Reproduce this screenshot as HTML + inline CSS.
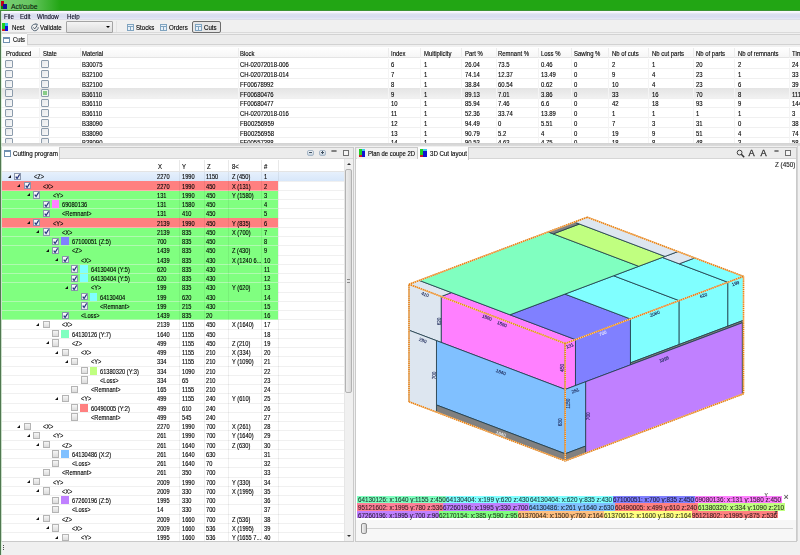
<!DOCTYPE html><html><head><meta charset="utf-8"><style>
*{margin:0;padding:0;box-sizing:border-box}
html,body{width:800px;height:555px;overflow:hidden;background:#f0f0f0;font-family:"Liberation Sans",sans-serif;color:#000}
.a{position:absolute}
.t{position:absolute;white-space:nowrap;line-height:1;transform-origin:0 50%;-webkit-text-stroke:0.12px currentColor}
.cb{position:absolute;width:8px;height:8px;border:1px solid #8c9cac;border-radius:1px;background:linear-gradient(135deg,#e6e9ec,#f8f8f8)}
</style></head><body><div id="wrap" class="a" style="left:0;top:0;width:800px;height:555px;overflow:hidden;filter:blur(0.3px)">
<div class="a" style="left:0px;top:0px;width:800px;height:11px;background:#22a614;"></div>
<div class="a" style="left:0px;top:0px;width:800px;height:11px;background:linear-gradient(90deg,rgba(150,220,150,0.75) 0px,rgba(150,220,150,0.6) 30px,rgba(34,166,20,0) 60px);"></div>
<div class="a" style="left:0px;top:9.8px;width:800px;height:1.2px;background:#3c9434;"></div>
<div class="a" style="left:1px;top:1px;width:3px;height:5px;background:#c00018;"></div>
<div class="a" style="left:3px;top:4px;width:4px;height:5px;background:#101098;"></div>
<div class="a" style="left:1px;top:6px;width:2px;height:3px;background:#108010;"></div>
<div class="t" style="left:11.00px;top:3.00px;font-size:7.4px;transform:scaleX(0.92);color:#0c1c0c">Act/cube</div>
<div class="a" style="left:1px;top:11px;width:799px;height:9px;background:linear-gradient(#fbfcff 0px,#f4f4fc 1.5px,#dcdff0 3px,#d8dcf0 6px,#e6e8f6 8px,#d4d4dc 9px);"></div>
<div class="t" style="left:3.50px;top:14.00px;font-size:6.8px;transform:scaleX(0.9);color:#0a0a1e">File</div>
<div class="t" style="left:20.00px;top:14.00px;font-size:6.8px;transform:scaleX(0.9);color:#0a0a1e">Edit</div>
<div class="t" style="left:37.00px;top:14.00px;font-size:6.8px;transform:scaleX(0.9);color:#0a0a1e">Window</div>
<div class="t" style="left:67.00px;top:14.00px;font-size:6.8px;transform:scaleX(0.9);color:#0a0a1e">Help</div>
<div class="a" style="left:1px;top:20px;width:799px;height:13px;background:#f0f0f0;border-bottom:1px solid #dadada"></div>
<div class="a" style="left:2px;top:23px;width:3px;height:8px;background:#20d020;"></div>
<div class="a" style="left:2px;top:29px;width:3px;height:2px;background:#d02020;"></div>
<div class="a" style="left:5px;top:23px;width:3px;height:3px;background:#30c0f0;"></div>
<div class="a" style="left:5px;top:26px;width:3px;height:5px;background:#1010e0;"></div>
<div class="t" style="left:12.00px;top:25.00px;font-size:6.8px;transform:scaleX(0.9)">Nest</div>
<svg class="a" style="left:30.5px;top:22.5px" width="8" height="9" viewBox="0 0 8 9"><path d="M5.6 1.6 A3.3 3.3 0 1 0 7.2 4.2" stroke="#586878" stroke-width="1" fill="none"/><path d="M4.4 0.6 L6.6 1.4 L5.4 3.2" stroke="#586878" stroke-width="0.8" fill="none"/><path d="M2.4 4.4 L3.7 5.9 L6 2.9" stroke="#3a4a5a" stroke-width="0.9" fill="none"/></svg>
<div class="t" style="left:40.00px;top:25.00px;font-size:6.8px;transform:scaleX(0.9)">Validate</div>
<div class="a" style="left:66px;top:21px;width:47px;height:12px;background:linear-gradient(#f4f4f4,#dedede);border:1px solid #a4a4a4;border-radius:1px"></div>
<div class="a" style="left:105.5px;top:26px;width:0;height:0;border-left:2px solid transparent;border-right:2px solid transparent;border-top:2.2px solid #000"></div>
<div class="a" style="left:116px;top:21px;width:1px;height:11px;background:#e4e4e4;"></div>
<div class="a" style="left:127px;top:23.5px;width:7px;height:7px;border:1px solid #80a4c0;background:#e8f0f8"></div><div class="a" style="left:127px;top:25.5px;width:7px;height:1px;background:#80a4c0"></div><div class="a" style="left:129.5px;top:25.5px;width:1px;height:5px;background:#80a4c0"></div>
<div class="t" style="left:136.00px;top:25.00px;font-size:6.8px;transform:scaleX(0.9)">Stocks</div>
<div class="a" style="left:160px;top:23.5px;width:7px;height:7px;border:1px solid #80a4c0;background:#e8f0f8"></div><div class="a" style="left:160px;top:25.5px;width:7px;height:1px;background:#80a4c0"></div><div class="a" style="left:162.5px;top:25.5px;width:1px;height:5px;background:#80a4c0"></div>
<div class="t" style="left:169.00px;top:25.00px;font-size:6.8px;transform:scaleX(0.9)">Orders</div>
<div class="a" style="left:192px;top:21px;width:29px;height:11.5px;background:#e6e6e6;border:1px solid #6c6c6c;border-radius:2px"></div>
<div class="a" style="left:195px;top:23.5px;width:7px;height:7px;border:1px solid #80a4c0;background:#e8f0f8"></div><div class="a" style="left:195px;top:25.5px;width:7px;height:1px;background:#80a4c0"></div><div class="a" style="left:197.5px;top:25.5px;width:1px;height:5px;background:#80a4c0"></div>
<div class="t" style="left:204.00px;top:25.00px;font-size:6.8px;transform:scaleX(0.9)">Cuts</div>
<div class="a" style="left:1px;top:33px;width:799px;height:13px;background:#f0f0f0;"></div>
<div class="a" style="left:27px;top:34px;width:773px;height:11px;background:#ececec;border:1px solid #d2d2d2;border-right:none"></div>
<div class="a" style="left:1px;top:33px;width:26px;height:13px;background:#fbfbfb;border-top:1px solid #dcdcdc"></div>
<div class="a" style="left:3px;top:36.5px;width:7px;height:6.5px;border:1px solid #7090b0;border-top-width:2px;background:#fff"></div>
<div class="t" style="left:13.00px;top:37.00px;font-size:6.8px;transform:scaleX(0.85)">Cuts</div>
<div class="a" style="left:1px;top:46.5px;width:799px;height:96px;background:#fff;"></div>
<div class="a" style="left:1px;top:46.5px;width:799px;height:11.5px;background:linear-gradient(#ffffff,#f6f6f6);border-bottom:1px solid #e4e4e4"></div>
<div class="t" style="left:6.00px;top:51.00px;font-size:6.6px;transform:scaleX(0.9)">Produced</div>
<div class="a" style="left:39px;top:47.5px;width:0.7px;height:10px;background:#ececec;"></div>
<div class="t" style="left:43.00px;top:51.00px;font-size:6.6px;transform:scaleX(0.9)">State</div>
<div class="a" style="left:80px;top:47.5px;width:0.7px;height:10px;background:#ececec;"></div>
<div class="t" style="left:82.00px;top:51.00px;font-size:6.6px;transform:scaleX(0.9)">Material</div>
<div class="a" style="left:237.5px;top:47.5px;width:0.7px;height:10px;background:#ececec;"></div>
<div class="t" style="left:240.00px;top:51.00px;font-size:6.6px;transform:scaleX(0.9)">Block</div>
<div class="a" style="left:388px;top:47.5px;width:0.7px;height:10px;background:#ececec;"></div>
<div class="t" style="left:390.50px;top:51.00px;font-size:6.6px;transform:scaleX(0.9)">Index</div>
<div class="a" style="left:420px;top:47.5px;width:0.7px;height:10px;background:#ececec;"></div>
<div class="t" style="left:423.50px;top:51.00px;font-size:6.6px;transform:scaleX(0.9)">Multiplicity</div>
<div class="a" style="left:461px;top:47.5px;width:0.7px;height:10px;background:#ececec;"></div>
<div class="t" style="left:465.00px;top:51.00px;font-size:6.6px;transform:scaleX(0.9)">Part %</div>
<div class="a" style="left:495.5px;top:47.5px;width:0.7px;height:10px;background:#ececec;"></div>
<div class="t" style="left:498.00px;top:51.00px;font-size:6.6px;transform:scaleX(0.9)">Remnant %</div>
<div class="a" style="left:538px;top:47.5px;width:0.7px;height:10px;background:#ececec;"></div>
<div class="t" style="left:541.00px;top:51.00px;font-size:6.6px;transform:scaleX(0.9)">Loss %</div>
<div class="a" style="left:571px;top:47.5px;width:0.7px;height:10px;background:#ececec;"></div>
<div class="t" style="left:574.00px;top:51.00px;font-size:6.6px;transform:scaleX(0.9)">Sawing %</div>
<div class="a" style="left:608.4px;top:47.5px;width:0.7px;height:10px;background:#ececec;"></div>
<div class="t" style="left:612.00px;top:51.00px;font-size:6.6px;transform:scaleX(0.9)">Nb of cuts</div>
<div class="a" style="left:648.3px;top:47.5px;width:0.7px;height:10px;background:#ececec;"></div>
<div class="t" style="left:651.70px;top:51.00px;font-size:6.6px;transform:scaleX(0.9)">Nb cut parts</div>
<div class="a" style="left:693px;top:47.5px;width:0.7px;height:10px;background:#ececec;"></div>
<div class="t" style="left:696.00px;top:51.00px;font-size:6.6px;transform:scaleX(0.9)">Nb of parts</div>
<div class="a" style="left:734.4px;top:47.5px;width:0.7px;height:10px;background:#ececec;"></div>
<div class="t" style="left:738.00px;top:51.00px;font-size:6.6px;transform:scaleX(0.9)">Nb of remnants</div>
<div class="a" style="left:788.7px;top:47.5px;width:0.7px;height:10px;background:#ececec;"></div>
<div class="t" style="left:792.00px;top:51.00px;font-size:6.6px;transform:scaleX(0.9)">Time</div>
<div class="a" style="left:900px;top:47.5px;width:0.7px;height:10px;background:#ececec;"></div>
<div class="a" style="left:1px;top:59.0px;width:799px;height:83.5px;overflow:hidden">
<div class="a" style="left:0px;top:9.25px;width:799px;height:0.5px;background:#f0f0f0;"></div>
<div class="cb" style="left:4px;top:1.2px"></div>
<div class="cb" style="left:39.5px;top:1.2px"></div>
<div class="t" style="left:81.00px;top:3.00px;font-size:6.6px;transform:scaleX(0.9)">B30075</div>
<div class="t" style="left:239.00px;top:3.00px;font-size:6.6px;transform:scaleX(0.9)">CH-02072018-006</div>
<div class="t" style="left:389.50px;top:3.00px;font-size:6.6px;transform:scaleX(0.9)">6</div>
<div class="t" style="left:422.50px;top:3.00px;font-size:6.6px;transform:scaleX(0.9)">1</div>
<div class="t" style="left:464.00px;top:3.00px;font-size:6.6px;transform:scaleX(0.9)">26.04</div>
<div class="t" style="left:497.00px;top:3.00px;font-size:6.6px;transform:scaleX(0.9)">73.5</div>
<div class="t" style="left:540.00px;top:3.00px;font-size:6.6px;transform:scaleX(0.9)">0.46</div>
<div class="t" style="left:573.00px;top:3.00px;font-size:6.6px;transform:scaleX(0.9)">0</div>
<div class="t" style="left:611.00px;top:3.00px;font-size:6.6px;transform:scaleX(0.9)">2</div>
<div class="t" style="left:650.70px;top:3.00px;font-size:6.6px;transform:scaleX(0.9)">1</div>
<div class="t" style="left:695.00px;top:3.00px;font-size:6.6px;transform:scaleX(0.9)">20</div>
<div class="t" style="left:737.00px;top:3.00px;font-size:6.6px;transform:scaleX(0.9)">2</div>
<div class="t" style="left:791.00px;top:3.00px;font-size:6.6px;transform:scaleX(0.9)">24</div>
<div class="a" style="left:0px;top:19.0px;width:799px;height:0.5px;background:#f0f0f0;"></div>
<div class="cb" style="left:4px;top:10.95px"></div>
<div class="cb" style="left:39.5px;top:10.95px"></div>
<div class="t" style="left:81.00px;top:13.00px;font-size:6.6px;transform:scaleX(0.9)">B32100</div>
<div class="t" style="left:239.00px;top:13.00px;font-size:6.6px;transform:scaleX(0.9)">CH-02072018-014</div>
<div class="t" style="left:389.50px;top:13.00px;font-size:6.6px;transform:scaleX(0.9)">7</div>
<div class="t" style="left:422.50px;top:13.00px;font-size:6.6px;transform:scaleX(0.9)">1</div>
<div class="t" style="left:464.00px;top:13.00px;font-size:6.6px;transform:scaleX(0.9)">74.14</div>
<div class="t" style="left:497.00px;top:13.00px;font-size:6.6px;transform:scaleX(0.9)">12.37</div>
<div class="t" style="left:540.00px;top:13.00px;font-size:6.6px;transform:scaleX(0.9)">13.49</div>
<div class="t" style="left:573.00px;top:13.00px;font-size:6.6px;transform:scaleX(0.9)">0</div>
<div class="t" style="left:611.00px;top:13.00px;font-size:6.6px;transform:scaleX(0.9)">9</div>
<div class="t" style="left:650.70px;top:13.00px;font-size:6.6px;transform:scaleX(0.9)">4</div>
<div class="t" style="left:695.00px;top:13.00px;font-size:6.6px;transform:scaleX(0.9)">23</div>
<div class="t" style="left:737.00px;top:13.00px;font-size:6.6px;transform:scaleX(0.9)">1</div>
<div class="t" style="left:791.00px;top:13.00px;font-size:6.6px;transform:scaleX(0.9)">33</div>
<div class="a" style="left:0px;top:28.75px;width:799px;height:0.5px;background:#f0f0f0;"></div>
<div class="cb" style="left:4px;top:20.7px"></div>
<div class="cb" style="left:39.5px;top:20.7px"></div>
<div class="t" style="left:81.00px;top:23.00px;font-size:6.6px;transform:scaleX(0.9)">B32100</div>
<div class="t" style="left:239.00px;top:23.00px;font-size:6.6px;transform:scaleX(0.9)">FF00678992</div>
<div class="t" style="left:389.50px;top:23.00px;font-size:6.6px;transform:scaleX(0.9)">8</div>
<div class="t" style="left:422.50px;top:23.00px;font-size:6.6px;transform:scaleX(0.9)">1</div>
<div class="t" style="left:464.00px;top:23.00px;font-size:6.6px;transform:scaleX(0.9)">38.84</div>
<div class="t" style="left:497.00px;top:23.00px;font-size:6.6px;transform:scaleX(0.9)">60.54</div>
<div class="t" style="left:540.00px;top:23.00px;font-size:6.6px;transform:scaleX(0.9)">0.62</div>
<div class="t" style="left:573.00px;top:23.00px;font-size:6.6px;transform:scaleX(0.9)">0</div>
<div class="t" style="left:611.00px;top:23.00px;font-size:6.6px;transform:scaleX(0.9)">10</div>
<div class="t" style="left:650.70px;top:23.00px;font-size:6.6px;transform:scaleX(0.9)">4</div>
<div class="t" style="left:695.00px;top:23.00px;font-size:6.6px;transform:scaleX(0.9)">23</div>
<div class="t" style="left:737.00px;top:23.00px;font-size:6.6px;transform:scaleX(0.9)">6</div>
<div class="t" style="left:791.00px;top:23.00px;font-size:6.6px;transform:scaleX(0.9)">39</div>
<div class="a" style="left:0px;top:28.75px;width:799px;height:10.25px;background:linear-gradient(#e4e4e4,#f1f1f1);"></div>
<div class="a" style="left:0px;top:38.5px;width:799px;height:0.5px;background:#f0f0f0;"></div>
<div class="cb" style="left:4px;top:30.45px"></div>
<div class="cb" style="left:39.5px;top:30.45px;background:#eef6ee"></div>
<div class="a" style="left:41.5px;top:32.45px;width:4px;height:4px;background:#88cc88;"></div>
<div class="t" style="left:81.00px;top:33.00px;font-size:6.6px;transform:scaleX(0.9)">B36110</div>
<div class="t" style="left:239.00px;top:33.00px;font-size:6.6px;transform:scaleX(0.9)">FF00680476</div>
<div class="t" style="left:389.50px;top:33.00px;font-size:6.6px;transform:scaleX(0.9)">9</div>
<div class="t" style="left:422.50px;top:33.00px;font-size:6.6px;transform:scaleX(0.9)">1</div>
<div class="t" style="left:464.00px;top:33.00px;font-size:6.6px;transform:scaleX(0.9)">89.13</div>
<div class="t" style="left:497.00px;top:33.00px;font-size:6.6px;transform:scaleX(0.9)">7.01</div>
<div class="t" style="left:540.00px;top:33.00px;font-size:6.6px;transform:scaleX(0.9)">3.86</div>
<div class="t" style="left:573.00px;top:33.00px;font-size:6.6px;transform:scaleX(0.9)">0</div>
<div class="t" style="left:611.00px;top:33.00px;font-size:6.6px;transform:scaleX(0.9)">33</div>
<div class="t" style="left:650.70px;top:33.00px;font-size:6.6px;transform:scaleX(0.9)">16</div>
<div class="t" style="left:695.00px;top:33.00px;font-size:6.6px;transform:scaleX(0.9)">70</div>
<div class="t" style="left:737.00px;top:33.00px;font-size:6.6px;transform:scaleX(0.9)">8</div>
<div class="t" style="left:791.00px;top:33.00px;font-size:6.6px;transform:scaleX(0.9)">111</div>
<div class="a" style="left:0px;top:48.25px;width:799px;height:0.5px;background:#f0f0f0;"></div>
<div class="cb" style="left:4px;top:40.2px"></div>
<div class="cb" style="left:39.5px;top:40.2px"></div>
<div class="t" style="left:81.00px;top:42.00px;font-size:6.6px;transform:scaleX(0.9)">B36110</div>
<div class="t" style="left:239.00px;top:42.00px;font-size:6.6px;transform:scaleX(0.9)">FF00680477</div>
<div class="t" style="left:389.50px;top:42.00px;font-size:6.6px;transform:scaleX(0.9)">10</div>
<div class="t" style="left:422.50px;top:42.00px;font-size:6.6px;transform:scaleX(0.9)">1</div>
<div class="t" style="left:464.00px;top:42.00px;font-size:6.6px;transform:scaleX(0.9)">85.94</div>
<div class="t" style="left:497.00px;top:42.00px;font-size:6.6px;transform:scaleX(0.9)">7.46</div>
<div class="t" style="left:540.00px;top:42.00px;font-size:6.6px;transform:scaleX(0.9)">6.6</div>
<div class="t" style="left:573.00px;top:42.00px;font-size:6.6px;transform:scaleX(0.9)">0</div>
<div class="t" style="left:611.00px;top:42.00px;font-size:6.6px;transform:scaleX(0.9)">42</div>
<div class="t" style="left:650.70px;top:42.00px;font-size:6.6px;transform:scaleX(0.9)">18</div>
<div class="t" style="left:695.00px;top:42.00px;font-size:6.6px;transform:scaleX(0.9)">93</div>
<div class="t" style="left:737.00px;top:42.00px;font-size:6.6px;transform:scaleX(0.9)">9</div>
<div class="t" style="left:791.00px;top:42.00px;font-size:6.6px;transform:scaleX(0.9)">144</div>
<div class="a" style="left:0px;top:58.0px;width:799px;height:0.5px;background:#f0f0f0;"></div>
<div class="cb" style="left:4px;top:49.95px"></div>
<div class="cb" style="left:39.5px;top:49.95px"></div>
<div class="t" style="left:81.00px;top:52.00px;font-size:6.6px;transform:scaleX(0.9)">B36110</div>
<div class="t" style="left:239.00px;top:52.00px;font-size:6.6px;transform:scaleX(0.9)">CH-02072018-016</div>
<div class="t" style="left:389.50px;top:52.00px;font-size:6.6px;transform:scaleX(0.9)">11</div>
<div class="t" style="left:422.50px;top:52.00px;font-size:6.6px;transform:scaleX(0.9)">1</div>
<div class="t" style="left:464.00px;top:52.00px;font-size:6.6px;transform:scaleX(0.9)">52.36</div>
<div class="t" style="left:497.00px;top:52.00px;font-size:6.6px;transform:scaleX(0.9)">33.74</div>
<div class="t" style="left:540.00px;top:52.00px;font-size:6.6px;transform:scaleX(0.9)">13.89</div>
<div class="t" style="left:573.00px;top:52.00px;font-size:6.6px;transform:scaleX(0.9)">0</div>
<div class="t" style="left:611.00px;top:52.00px;font-size:6.6px;transform:scaleX(0.9)">1</div>
<div class="t" style="left:650.70px;top:52.00px;font-size:6.6px;transform:scaleX(0.9)">1</div>
<div class="t" style="left:695.00px;top:52.00px;font-size:6.6px;transform:scaleX(0.9)">1</div>
<div class="t" style="left:737.00px;top:52.00px;font-size:6.6px;transform:scaleX(0.9)">1</div>
<div class="t" style="left:791.00px;top:52.00px;font-size:6.6px;transform:scaleX(0.9)">3</div>
<div class="a" style="left:0px;top:67.75px;width:799px;height:0.5px;background:#f0f0f0;"></div>
<div class="cb" style="left:4px;top:59.7px"></div>
<div class="cb" style="left:39.5px;top:59.7px"></div>
<div class="t" style="left:81.00px;top:62.00px;font-size:6.6px;transform:scaleX(0.9)">B38090</div>
<div class="t" style="left:239.00px;top:62.00px;font-size:6.6px;transform:scaleX(0.9)">FB00256959</div>
<div class="t" style="left:389.50px;top:62.00px;font-size:6.6px;transform:scaleX(0.9)">12</div>
<div class="t" style="left:422.50px;top:62.00px;font-size:6.6px;transform:scaleX(0.9)">1</div>
<div class="t" style="left:464.00px;top:62.00px;font-size:6.6px;transform:scaleX(0.9)">94.49</div>
<div class="t" style="left:497.00px;top:62.00px;font-size:6.6px;transform:scaleX(0.9)">0</div>
<div class="t" style="left:540.00px;top:62.00px;font-size:6.6px;transform:scaleX(0.9)">5.51</div>
<div class="t" style="left:573.00px;top:62.00px;font-size:6.6px;transform:scaleX(0.9)">0</div>
<div class="t" style="left:611.00px;top:62.00px;font-size:6.6px;transform:scaleX(0.9)">7</div>
<div class="t" style="left:650.70px;top:62.00px;font-size:6.6px;transform:scaleX(0.9)">3</div>
<div class="t" style="left:695.00px;top:62.00px;font-size:6.6px;transform:scaleX(0.9)">31</div>
<div class="t" style="left:737.00px;top:62.00px;font-size:6.6px;transform:scaleX(0.9)">0</div>
<div class="t" style="left:791.00px;top:62.00px;font-size:6.6px;transform:scaleX(0.9)">38</div>
<div class="a" style="left:0px;top:77.5px;width:799px;height:0.5px;background:#f0f0f0;"></div>
<div class="cb" style="left:4px;top:69.45px"></div>
<div class="cb" style="left:39.5px;top:69.45px"></div>
<div class="t" style="left:81.00px;top:72.00px;font-size:6.6px;transform:scaleX(0.9)">B38090</div>
<div class="t" style="left:239.00px;top:72.00px;font-size:6.6px;transform:scaleX(0.9)">FB00256958</div>
<div class="t" style="left:389.50px;top:72.00px;font-size:6.6px;transform:scaleX(0.9)">13</div>
<div class="t" style="left:422.50px;top:72.00px;font-size:6.6px;transform:scaleX(0.9)">1</div>
<div class="t" style="left:464.00px;top:72.00px;font-size:6.6px;transform:scaleX(0.9)">90.79</div>
<div class="t" style="left:497.00px;top:72.00px;font-size:6.6px;transform:scaleX(0.9)">5.2</div>
<div class="t" style="left:540.00px;top:72.00px;font-size:6.6px;transform:scaleX(0.9)">4</div>
<div class="t" style="left:573.00px;top:72.00px;font-size:6.6px;transform:scaleX(0.9)">0</div>
<div class="t" style="left:611.00px;top:72.00px;font-size:6.6px;transform:scaleX(0.9)">19</div>
<div class="t" style="left:650.70px;top:72.00px;font-size:6.6px;transform:scaleX(0.9)">9</div>
<div class="t" style="left:695.00px;top:72.00px;font-size:6.6px;transform:scaleX(0.9)">51</div>
<div class="t" style="left:737.00px;top:72.00px;font-size:6.6px;transform:scaleX(0.9)">4</div>
<div class="t" style="left:791.00px;top:72.00px;font-size:6.6px;transform:scaleX(0.9)">74</div>
<div class="a" style="left:0px;top:87.25px;width:799px;height:0.5px;background:#f0f0f0;"></div>
<div class="cb" style="left:4px;top:79.2px"></div>
<div class="cb" style="left:39.5px;top:79.2px"></div>
<div class="t" style="left:81.00px;top:81.00px;font-size:6.6px;transform:scaleX(0.9)">B38090</div>
<div class="t" style="left:239.00px;top:81.00px;font-size:6.6px;transform:scaleX(0.9)">FF00557388</div>
<div class="t" style="left:389.50px;top:81.00px;font-size:6.6px;transform:scaleX(0.9)">14</div>
<div class="t" style="left:422.50px;top:81.00px;font-size:6.6px;transform:scaleX(0.9)">1</div>
<div class="t" style="left:464.00px;top:81.00px;font-size:6.6px;transform:scaleX(0.9)">90.53</div>
<div class="t" style="left:497.00px;top:81.00px;font-size:6.6px;transform:scaleX(0.9)">4.63</div>
<div class="t" style="left:540.00px;top:81.00px;font-size:6.6px;transform:scaleX(0.9)">4.75</div>
<div class="t" style="left:573.00px;top:81.00px;font-size:6.6px;transform:scaleX(0.9)">0</div>
<div class="t" style="left:611.00px;top:81.00px;font-size:6.6px;transform:scaleX(0.9)">18</div>
<div class="t" style="left:650.70px;top:81.00px;font-size:6.6px;transform:scaleX(0.9)">8</div>
<div class="t" style="left:695.00px;top:81.00px;font-size:6.6px;transform:scaleX(0.9)">48</div>
<div class="t" style="left:737.00px;top:81.00px;font-size:6.6px;transform:scaleX(0.9)">3</div>
<div class="t" style="left:791.00px;top:81.00px;font-size:6.6px;transform:scaleX(0.9)">58</div>
<div class="a" style="left:38px;top:0px;width:0.6px;height:84px;background:#f4f4f4;"></div>
<div class="a" style="left:79px;top:0px;width:0.6px;height:84px;background:#f4f4f4;"></div>
<div class="a" style="left:236.5px;top:0px;width:0.6px;height:84px;background:#f4f4f4;"></div>
<div class="a" style="left:387px;top:0px;width:0.6px;height:84px;background:#f4f4f4;"></div>
<div class="a" style="left:419px;top:0px;width:0.6px;height:84px;background:#f4f4f4;"></div>
<div class="a" style="left:460px;top:0px;width:0.6px;height:84px;background:#f4f4f4;"></div>
<div class="a" style="left:494.5px;top:0px;width:0.6px;height:84px;background:#f4f4f4;"></div>
<div class="a" style="left:537px;top:0px;width:0.6px;height:84px;background:#f4f4f4;"></div>
<div class="a" style="left:570px;top:0px;width:0.6px;height:84px;background:#f4f4f4;"></div>
<div class="a" style="left:607.4px;top:0px;width:0.6px;height:84px;background:#f4f4f4;"></div>
<div class="a" style="left:647.3px;top:0px;width:0.6px;height:84px;background:#f4f4f4;"></div>
<div class="a" style="left:692px;top:0px;width:0.6px;height:84px;background:#f4f4f4;"></div>
<div class="a" style="left:733.4px;top:0px;width:0.6px;height:84px;background:#f4f4f4;"></div>
<div class="a" style="left:787.7px;top:0px;width:0.6px;height:84px;background:#f4f4f4;"></div>
<div class="a" style="left:899px;top:0px;width:0.6px;height:84px;background:#f4f4f4;"></div>
</div>
<div class="a" style="left:1px;top:142.5px;width:799px;height:3.5px;background:linear-gradient(#d2d2d2,#dcdcdc);"></div>
<div class="a" style="left:1px;top:146px;width:799px;height:395px;background:#f0f0f0;"></div>
<div class="a" style="left:1px;top:146.5px;width:352.5px;height:395.5px;background:#fff;border:1px solid #cacaca"></div>
<div class="a" style="left:2px;top:147.5px;width:350.5px;height:11.5px;background:#ececec;border-bottom:1px solid #d6d6d6"></div>
<div class="a" style="left:2px;top:147.0px;width:58px;height:12.5px;background:#fdfdfd;border-right:1px solid #cacaca"></div>
<div class="a" style="left:3.5px;top:150px;width:7px;height:6.5px;border:1px solid #7090b0;border-top-width:2px;background:#fff"></div>
<div class="t" style="left:13.00px;top:151.00px;font-size:6.8px;transform:scaleX(0.92)">Cutting program</div>
<div class="a" style="left:307px;top:149.5px;width:6.8px;height:6.8px;border:1px solid #a8b8c8;border-radius:2px;background:linear-gradient(#f4f6f8,#c4d0dc)"></div>
<div class="a" style="left:308.8px;top:152.4px;width:3.2px;height:1px;background:#405060;"></div>
<div class="a" style="left:319px;top:149.5px;width:6.8px;height:6.8px;border:1px solid #a8b8c8;border-radius:2px;background:linear-gradient(#f4f6f8,#c4d0dc)"></div>
<div class="a" style="left:320.8px;top:152.4px;width:3.2px;height:1px;background:#405060;"></div>
<div class="a" style="left:321.9px;top:151.3px;width:1px;height:3.2px;background:#405060;"></div>
<div class="a" style="left:331px;top:149.6px;width:5.5px;height:2.4px;border:0.8px solid #808080;border-radius:1.2px;background:#c8c8c8"></div>
<div class="a" style="left:342.5px;top:149.5px;width:6px;height:6px;border:1px solid #707070;border-top-width:1.8px;background:#f4f4f4"></div>
<div class="t" style="left:157.50px;top:164.00px;font-size:6.6px;transform:scaleX(0.9)">X</div>
<div class="t" style="left:182.00px;top:164.00px;font-size:6.6px;transform:scaleX(0.9)">Y</div>
<div class="t" style="left:206.50px;top:164.00px;font-size:6.6px;transform:scaleX(0.9)">Z</div>
<div class="t" style="left:231.50px;top:164.00px;font-size:6.6px;transform:scaleX(0.9)">8&lt;</div>
<div class="t" style="left:264.00px;top:164.00px;font-size:6.6px;transform:scaleX(0.9)">#</div>
<div class="a" style="left:179px;top:160px;width:0.7px;height:11px;background:#e8e8e8;"></div>
<div class="a" style="left:203.5px;top:160px;width:0.7px;height:11px;background:#e8e8e8;"></div>
<div class="a" style="left:228px;top:160px;width:0.7px;height:11px;background:#e8e8e8;"></div>
<div class="a" style="left:261px;top:160px;width:0.7px;height:11px;background:#e8e8e8;"></div>
<div class="a" style="left:277.5px;top:160px;width:0.7px;height:11px;background:#e8e8e8;"></div>
<div class="a" style="left:2px;top:171.4px;width:342px;height:0.6px;background:#e4e4e4;"></div>
<div class="a" style="left:2px;top:172px;width:342px;height:369px;overflow:hidden">
<div class="a" style="left:0px;top:-0.3px;width:342px;height:8.95px;background:linear-gradient(#e6f0fc,#d8e7fa);"></div>
<div class="a" style="left:0px;top:8.55px;width:342px;height:0.7px;background:#f0f0f0;"></div>
<div class="a" style="left:5.8px;top:2.8px;width:0;height:0;border-left:3px solid transparent;border-bottom:3px solid #111"></div>
<div class="a" style="left:12.0px;top:0.9px;width:7.2px;height:7.2px;border:1px solid #8a96ac;background:linear-gradient(#fafafa,#e2e6ee)"></div>
<svg class="a" style="left:12.0px;top:0.9px" width="7.2" height="7.2" viewBox="0 0 7 7"><path d="M1.7 3.5 L3 5.3 L5.5 1.3" stroke="#20307a" stroke-width="1.1" fill="none"/></svg>
<div class="t" style="left:31.50px;top:2.00px;font-size:6.6px;transform:scaleX(0.86)">&lt;Z&gt;</div>
<div class="t" style="left:155.00px;top:2.00px;font-size:6.6px;transform:scaleX(0.86)">2270</div>
<div class="t" style="left:179.50px;top:2.00px;font-size:6.6px;transform:scaleX(0.86)">1990</div>
<div class="t" style="left:204.00px;top:2.00px;font-size:6.6px;transform:scaleX(0.86)">1150</div>
<div class="t" style="left:229.50px;top:2.00px;font-size:6.6px;transform:scaleX(0.86)">Z (450)</div>
<div class="t" style="left:262.00px;top:2.00px;font-size:6.6px;transform:scaleX(0.86)">1</div>
<div class="a" style="left:0px;top:9.25px;width:275.8px;height:8.55px;background:#ff8080;"></div>
<div class="a" style="left:0px;top:17.8px;width:275.8px;height:0.7px;background:#ffb0b0;"></div>
<div class="a" style="left:275.8px;top:17.8px;width:66.2px;height:0.7px;background:#f0f0f0;"></div>
<div class="a" style="left:15.3px;top:12.05px;width:0;height:0;border-left:3px solid transparent;border-bottom:3px solid #111"></div>
<div class="a" style="left:21.5px;top:10.15px;width:7.2px;height:7.2px;border:1px solid #8a96ac;background:linear-gradient(#fafafa,#e2e6ee)"></div>
<svg class="a" style="left:21.5px;top:10.15px" width="7.2" height="7.2" viewBox="0 0 7 7"><path d="M1.7 3.5 L3 5.3 L5.5 1.3" stroke="#20307a" stroke-width="1.1" fill="none"/></svg>
<div class="t" style="left:41.00px;top:12.00px;font-size:6.6px;transform:scaleX(0.86)">&lt;X&gt;</div>
<div class="t" style="left:155.00px;top:12.00px;font-size:6.6px;transform:scaleX(0.86)">2270</div>
<div class="t" style="left:179.50px;top:12.00px;font-size:6.6px;transform:scaleX(0.86)">1990</div>
<div class="t" style="left:204.00px;top:12.00px;font-size:6.6px;transform:scaleX(0.86)">450</div>
<div class="t" style="left:229.50px;top:12.00px;font-size:6.6px;transform:scaleX(0.86)">X (131)</div>
<div class="t" style="left:262.00px;top:12.00px;font-size:6.6px;transform:scaleX(0.86)">2</div>
<div class="a" style="left:0px;top:18.5px;width:275.8px;height:8.55px;background:#80ff80;"></div>
<div class="a" style="left:0px;top:27.05px;width:275.8px;height:0.7px;background:#b0fab0;"></div>
<div class="a" style="left:275.8px;top:27.05px;width:66.2px;height:0.7px;background:#f0f0f0;"></div>
<div class="a" style="left:24.8px;top:21.3px;width:0;height:0;border-left:3px solid transparent;border-bottom:3px solid #111"></div>
<div class="a" style="left:31.0px;top:19.4px;width:7.2px;height:7.2px;border:1px solid #8a96ac;background:linear-gradient(#fafafa,#e2e6ee)"></div>
<svg class="a" style="left:31.0px;top:19.4px" width="7.2" height="7.2" viewBox="0 0 7 7"><path d="M1.7 3.5 L3 5.3 L5.5 1.3" stroke="#20307a" stroke-width="1.1" fill="none"/></svg>
<div class="t" style="left:50.50px;top:21.00px;font-size:6.6px;transform:scaleX(0.86)">&lt;Y&gt;</div>
<div class="t" style="left:155.00px;top:21.00px;font-size:6.6px;transform:scaleX(0.86)">131</div>
<div class="t" style="left:179.50px;top:21.00px;font-size:6.6px;transform:scaleX(0.86)">1990</div>
<div class="t" style="left:204.00px;top:21.00px;font-size:6.6px;transform:scaleX(0.86)">450</div>
<div class="t" style="left:229.50px;top:21.00px;font-size:6.6px;transform:scaleX(0.86)">Y (1580)</div>
<div class="t" style="left:262.00px;top:21.00px;font-size:6.6px;transform:scaleX(0.86)">3</div>
<div class="a" style="left:0px;top:27.75px;width:275.8px;height:8.55px;background:#80ff80;"></div>
<div class="a" style="left:0px;top:36.3px;width:275.8px;height:0.7px;background:#b0fab0;"></div>
<div class="a" style="left:275.8px;top:36.3px;width:66.2px;height:0.7px;background:#f0f0f0;"></div>
<div class="a" style="left:40.5px;top:28.65px;width:7.2px;height:7.2px;border:1px solid #8a96ac;background:linear-gradient(#fafafa,#e2e6ee)"></div>
<svg class="a" style="left:40.5px;top:28.65px" width="7.2" height="7.2" viewBox="0 0 7 7"><path d="M1.7 3.5 L3 5.3 L5.5 1.3" stroke="#20307a" stroke-width="1.1" fill="none"/></svg>
<div class="a" style="left:49.8px;top:28.45px;width:7.6px;height:7.6px;background:#ff80ff;"></div>
<div class="t" style="left:60.00px;top:30.00px;font-size:6.6px;transform:scaleX(0.86)">69080136</div>
<div class="t" style="left:155.00px;top:30.00px;font-size:6.6px;transform:scaleX(0.86)">131</div>
<div class="t" style="left:179.50px;top:30.00px;font-size:6.6px;transform:scaleX(0.86)">1580</div>
<div class="t" style="left:204.00px;top:30.00px;font-size:6.6px;transform:scaleX(0.86)">450</div>
<div class="t" style="left:229.50px;top:30.00px;font-size:6.6px;transform:scaleX(0.86)"></div>
<div class="t" style="left:262.00px;top:30.00px;font-size:6.6px;transform:scaleX(0.86)">4</div>
<div class="a" style="left:0px;top:37.0px;width:275.8px;height:8.55px;background:#80ff80;"></div>
<div class="a" style="left:0px;top:45.55px;width:275.8px;height:0.7px;background:#b0fab0;"></div>
<div class="a" style="left:275.8px;top:45.55px;width:66.2px;height:0.7px;background:#f0f0f0;"></div>
<div class="a" style="left:40.5px;top:37.9px;width:7.2px;height:7.2px;border:1px solid #8a96ac;background:linear-gradient(#fafafa,#e2e6ee)"></div>
<svg class="a" style="left:40.5px;top:37.9px" width="7.2" height="7.2" viewBox="0 0 7 7"><path d="M1.7 3.5 L3 5.3 L5.5 1.3" stroke="#20307a" stroke-width="1.1" fill="none"/></svg>
<div class="t" style="left:60.00px;top:39.00px;font-size:6.6px;transform:scaleX(0.86)">&lt;Remnant&gt;</div>
<div class="t" style="left:155.00px;top:39.00px;font-size:6.6px;transform:scaleX(0.86)">131</div>
<div class="t" style="left:179.50px;top:39.00px;font-size:6.6px;transform:scaleX(0.86)">410</div>
<div class="t" style="left:204.00px;top:39.00px;font-size:6.6px;transform:scaleX(0.86)">450</div>
<div class="t" style="left:229.50px;top:39.00px;font-size:6.6px;transform:scaleX(0.86)"></div>
<div class="t" style="left:262.00px;top:39.00px;font-size:6.6px;transform:scaleX(0.86)">5</div>
<div class="a" style="left:0px;top:46.25px;width:275.8px;height:8.55px;background:#ff8080;"></div>
<div class="a" style="left:0px;top:54.8px;width:275.8px;height:0.7px;background:#ffb0b0;"></div>
<div class="a" style="left:275.8px;top:54.8px;width:66.2px;height:0.7px;background:#f0f0f0;"></div>
<div class="a" style="left:24.8px;top:49.05px;width:0;height:0;border-left:3px solid transparent;border-bottom:3px solid #111"></div>
<div class="a" style="left:31.0px;top:47.15px;width:7.2px;height:7.2px;border:1px solid #8a96ac;background:linear-gradient(#fafafa,#e2e6ee)"></div>
<svg class="a" style="left:31.0px;top:47.15px" width="7.2" height="7.2" viewBox="0 0 7 7"><path d="M1.7 3.5 L3 5.3 L5.5 1.3" stroke="#20307a" stroke-width="1.1" fill="none"/></svg>
<div class="t" style="left:50.50px;top:49.00px;font-size:6.6px;transform:scaleX(0.86)">&lt;Y&gt;</div>
<div class="t" style="left:155.00px;top:49.00px;font-size:6.6px;transform:scaleX(0.86)">2139</div>
<div class="t" style="left:179.50px;top:49.00px;font-size:6.6px;transform:scaleX(0.86)">1990</div>
<div class="t" style="left:204.00px;top:49.00px;font-size:6.6px;transform:scaleX(0.86)">450</div>
<div class="t" style="left:229.50px;top:49.00px;font-size:6.6px;transform:scaleX(0.86)">Y (835)</div>
<div class="t" style="left:262.00px;top:49.00px;font-size:6.6px;transform:scaleX(0.86)">6</div>
<div class="a" style="left:0px;top:55.5px;width:275.8px;height:8.55px;background:#80ff80;"></div>
<div class="a" style="left:0px;top:64.05px;width:275.8px;height:0.7px;background:#b0fab0;"></div>
<div class="a" style="left:275.8px;top:64.05px;width:66.2px;height:0.7px;background:#f0f0f0;"></div>
<div class="a" style="left:34.3px;top:58.3px;width:0;height:0;border-left:3px solid transparent;border-bottom:3px solid #111"></div>
<div class="a" style="left:40.5px;top:56.4px;width:7.2px;height:7.2px;border:1px solid #8a96ac;background:linear-gradient(#fafafa,#e2e6ee)"></div>
<svg class="a" style="left:40.5px;top:56.4px" width="7.2" height="7.2" viewBox="0 0 7 7"><path d="M1.7 3.5 L3 5.3 L5.5 1.3" stroke="#20307a" stroke-width="1.1" fill="none"/></svg>
<div class="t" style="left:60.00px;top:58.00px;font-size:6.6px;transform:scaleX(0.86)">&lt;X&gt;</div>
<div class="t" style="left:155.00px;top:58.00px;font-size:6.6px;transform:scaleX(0.86)">2139</div>
<div class="t" style="left:179.50px;top:58.00px;font-size:6.6px;transform:scaleX(0.86)">835</div>
<div class="t" style="left:204.00px;top:58.00px;font-size:6.6px;transform:scaleX(0.86)">450</div>
<div class="t" style="left:229.50px;top:58.00px;font-size:6.6px;transform:scaleX(0.86)">X (700)</div>
<div class="t" style="left:262.00px;top:58.00px;font-size:6.6px;transform:scaleX(0.86)">7</div>
<div class="a" style="left:0px;top:64.75px;width:275.8px;height:8.55px;background:#80ff80;"></div>
<div class="a" style="left:0px;top:73.3px;width:275.8px;height:0.7px;background:#b0fab0;"></div>
<div class="a" style="left:275.8px;top:73.3px;width:66.2px;height:0.7px;background:#f0f0f0;"></div>
<div class="a" style="left:50.0px;top:65.65px;width:7.2px;height:7.2px;border:1px solid #8a96ac;background:linear-gradient(#fafafa,#e2e6ee)"></div>
<svg class="a" style="left:50.0px;top:65.65px" width="7.2" height="7.2" viewBox="0 0 7 7"><path d="M1.7 3.5 L3 5.3 L5.5 1.3" stroke="#20307a" stroke-width="1.1" fill="none"/></svg>
<div class="a" style="left:59.3px;top:65.45px;width:7.6px;height:7.6px;background:#8080ff;"></div>
<div class="t" style="left:69.50px;top:67.00px;font-size:6.6px;transform:scaleX(0.86)">67100051 (Z:5)</div>
<div class="t" style="left:155.00px;top:67.00px;font-size:6.6px;transform:scaleX(0.86)">700</div>
<div class="t" style="left:179.50px;top:67.00px;font-size:6.6px;transform:scaleX(0.86)">835</div>
<div class="t" style="left:204.00px;top:67.00px;font-size:6.6px;transform:scaleX(0.86)">450</div>
<div class="t" style="left:229.50px;top:67.00px;font-size:6.6px;transform:scaleX(0.86)"></div>
<div class="t" style="left:262.00px;top:67.00px;font-size:6.6px;transform:scaleX(0.86)">8</div>
<div class="a" style="left:0px;top:74.0px;width:275.8px;height:8.55px;background:#80ff80;"></div>
<div class="a" style="left:0px;top:82.55px;width:275.8px;height:0.7px;background:#b0fab0;"></div>
<div class="a" style="left:275.8px;top:82.55px;width:66.2px;height:0.7px;background:#f0f0f0;"></div>
<div class="a" style="left:43.8px;top:76.8px;width:0;height:0;border-left:3px solid transparent;border-bottom:3px solid #111"></div>
<div class="a" style="left:50.0px;top:74.9px;width:7.2px;height:7.2px;border:1px solid #8a96ac;background:linear-gradient(#fafafa,#e2e6ee)"></div>
<svg class="a" style="left:50.0px;top:74.9px" width="7.2" height="7.2" viewBox="0 0 7 7"><path d="M1.7 3.5 L3 5.3 L5.5 1.3" stroke="#20307a" stroke-width="1.1" fill="none"/></svg>
<div class="t" style="left:69.50px;top:76.00px;font-size:6.6px;transform:scaleX(0.86)">&lt;Z&gt;</div>
<div class="t" style="left:155.00px;top:76.00px;font-size:6.6px;transform:scaleX(0.86)">1439</div>
<div class="t" style="left:179.50px;top:76.00px;font-size:6.6px;transform:scaleX(0.86)">835</div>
<div class="t" style="left:204.00px;top:76.00px;font-size:6.6px;transform:scaleX(0.86)">450</div>
<div class="t" style="left:229.50px;top:76.00px;font-size:6.6px;transform:scaleX(0.86)">Z (430)</div>
<div class="t" style="left:262.00px;top:76.00px;font-size:6.6px;transform:scaleX(0.86)">9</div>
<div class="a" style="left:0px;top:83.25px;width:275.8px;height:8.55px;background:#80ff80;"></div>
<div class="a" style="left:0px;top:91.8px;width:275.8px;height:0.7px;background:#b0fab0;"></div>
<div class="a" style="left:275.8px;top:91.8px;width:66.2px;height:0.7px;background:#f0f0f0;"></div>
<div class="a" style="left:53.3px;top:86.05px;width:0;height:0;border-left:3px solid transparent;border-bottom:3px solid #111"></div>
<div class="a" style="left:59.5px;top:84.15px;width:7.2px;height:7.2px;border:1px solid #8a96ac;background:linear-gradient(#fafafa,#e2e6ee)"></div>
<svg class="a" style="left:59.5px;top:84.15px" width="7.2" height="7.2" viewBox="0 0 7 7"><path d="M1.7 3.5 L3 5.3 L5.5 1.3" stroke="#20307a" stroke-width="1.1" fill="none"/></svg>
<div class="t" style="left:79.00px;top:86.00px;font-size:6.6px;transform:scaleX(0.86)">&lt;X&gt;</div>
<div class="t" style="left:155.00px;top:86.00px;font-size:6.6px;transform:scaleX(0.86)">1439</div>
<div class="t" style="left:179.50px;top:86.00px;font-size:6.6px;transform:scaleX(0.86)">835</div>
<div class="t" style="left:204.00px;top:86.00px;font-size:6.6px;transform:scaleX(0.86)">430</div>
<div class="t" style="left:229.50px;top:86.00px;font-size:6.6px;transform:scaleX(0.86)">X (1240 6...</div>
<div class="t" style="left:262.00px;top:86.00px;font-size:6.6px;transform:scaleX(0.86)">10</div>
<div class="a" style="left:0px;top:92.5px;width:275.8px;height:8.55px;background:#80ff80;"></div>
<div class="a" style="left:0px;top:101.05px;width:275.8px;height:0.7px;background:#b0fab0;"></div>
<div class="a" style="left:275.8px;top:101.05px;width:66.2px;height:0.7px;background:#f0f0f0;"></div>
<div class="a" style="left:69.0px;top:93.4px;width:7.2px;height:7.2px;border:1px solid #8a96ac;background:linear-gradient(#fafafa,#e2e6ee)"></div>
<svg class="a" style="left:69.0px;top:93.4px" width="7.2" height="7.2" viewBox="0 0 7 7"><path d="M1.7 3.5 L3 5.3 L5.5 1.3" stroke="#20307a" stroke-width="1.1" fill="none"/></svg>
<div class="a" style="left:78.3px;top:93.2px;width:7.6px;height:7.6px;background:#80ffff;"></div>
<div class="t" style="left:88.50px;top:95.00px;font-size:6.6px;transform:scaleX(0.86)">64130404 (Y:5)</div>
<div class="t" style="left:155.00px;top:95.00px;font-size:6.6px;transform:scaleX(0.86)">620</div>
<div class="t" style="left:179.50px;top:95.00px;font-size:6.6px;transform:scaleX(0.86)">835</div>
<div class="t" style="left:204.00px;top:95.00px;font-size:6.6px;transform:scaleX(0.86)">430</div>
<div class="t" style="left:229.50px;top:95.00px;font-size:6.6px;transform:scaleX(0.86)"></div>
<div class="t" style="left:262.00px;top:95.00px;font-size:6.6px;transform:scaleX(0.86)">11</div>
<div class="a" style="left:0px;top:101.75px;width:275.8px;height:8.55px;background:#80ff80;"></div>
<div class="a" style="left:0px;top:110.3px;width:275.8px;height:0.7px;background:#b0fab0;"></div>
<div class="a" style="left:275.8px;top:110.3px;width:66.2px;height:0.7px;background:#f0f0f0;"></div>
<div class="a" style="left:69.0px;top:102.65px;width:7.2px;height:7.2px;border:1px solid #8a96ac;background:linear-gradient(#fafafa,#e2e6ee)"></div>
<svg class="a" style="left:69.0px;top:102.65px" width="7.2" height="7.2" viewBox="0 0 7 7"><path d="M1.7 3.5 L3 5.3 L5.5 1.3" stroke="#20307a" stroke-width="1.1" fill="none"/></svg>
<div class="a" style="left:78.3px;top:102.45px;width:7.6px;height:7.6px;background:#80ffff;"></div>
<div class="t" style="left:88.50px;top:104.00px;font-size:6.6px;transform:scaleX(0.86)">64130404 (Y:5)</div>
<div class="t" style="left:155.00px;top:104.00px;font-size:6.6px;transform:scaleX(0.86)">620</div>
<div class="t" style="left:179.50px;top:104.00px;font-size:6.6px;transform:scaleX(0.86)">835</div>
<div class="t" style="left:204.00px;top:104.00px;font-size:6.6px;transform:scaleX(0.86)">430</div>
<div class="t" style="left:229.50px;top:104.00px;font-size:6.6px;transform:scaleX(0.86)"></div>
<div class="t" style="left:262.00px;top:104.00px;font-size:6.6px;transform:scaleX(0.86)">12</div>
<div class="a" style="left:0px;top:111.0px;width:275.8px;height:8.55px;background:#80ff80;"></div>
<div class="a" style="left:0px;top:119.55px;width:275.8px;height:0.7px;background:#b0fab0;"></div>
<div class="a" style="left:275.8px;top:119.55px;width:66.2px;height:0.7px;background:#f0f0f0;"></div>
<div class="a" style="left:62.8px;top:113.8px;width:0;height:0;border-left:3px solid transparent;border-bottom:3px solid #111"></div>
<div class="a" style="left:69.0px;top:111.9px;width:7.2px;height:7.2px;border:1px solid #8a96ac;background:linear-gradient(#fafafa,#e2e6ee)"></div>
<svg class="a" style="left:69.0px;top:111.9px" width="7.2" height="7.2" viewBox="0 0 7 7"><path d="M1.7 3.5 L3 5.3 L5.5 1.3" stroke="#20307a" stroke-width="1.1" fill="none"/></svg>
<div class="t" style="left:88.50px;top:113.00px;font-size:6.6px;transform:scaleX(0.86)">&lt;Y&gt;</div>
<div class="t" style="left:155.00px;top:113.00px;font-size:6.6px;transform:scaleX(0.86)">199</div>
<div class="t" style="left:179.50px;top:113.00px;font-size:6.6px;transform:scaleX(0.86)">835</div>
<div class="t" style="left:204.00px;top:113.00px;font-size:6.6px;transform:scaleX(0.86)">430</div>
<div class="t" style="left:229.50px;top:113.00px;font-size:6.6px;transform:scaleX(0.86)">Y (620)</div>
<div class="t" style="left:262.00px;top:113.00px;font-size:6.6px;transform:scaleX(0.86)">13</div>
<div class="a" style="left:0px;top:120.25px;width:275.8px;height:8.55px;background:#80ff80;"></div>
<div class="a" style="left:0px;top:128.8px;width:275.8px;height:0.7px;background:#b0fab0;"></div>
<div class="a" style="left:275.8px;top:128.8px;width:66.2px;height:0.7px;background:#f0f0f0;"></div>
<div class="a" style="left:78.5px;top:121.15px;width:7.2px;height:7.2px;border:1px solid #8a96ac;background:linear-gradient(#fafafa,#e2e6ee)"></div>
<svg class="a" style="left:78.5px;top:121.15px" width="7.2" height="7.2" viewBox="0 0 7 7"><path d="M1.7 3.5 L3 5.3 L5.5 1.3" stroke="#20307a" stroke-width="1.1" fill="none"/></svg>
<div class="a" style="left:87.8px;top:120.95px;width:7.6px;height:7.6px;background:#80ffff;"></div>
<div class="t" style="left:98.00px;top:123.00px;font-size:6.6px;transform:scaleX(0.86)">64130404</div>
<div class="t" style="left:155.00px;top:123.00px;font-size:6.6px;transform:scaleX(0.86)">199</div>
<div class="t" style="left:179.50px;top:123.00px;font-size:6.6px;transform:scaleX(0.86)">620</div>
<div class="t" style="left:204.00px;top:123.00px;font-size:6.6px;transform:scaleX(0.86)">430</div>
<div class="t" style="left:229.50px;top:123.00px;font-size:6.6px;transform:scaleX(0.86)"></div>
<div class="t" style="left:262.00px;top:123.00px;font-size:6.6px;transform:scaleX(0.86)">14</div>
<div class="a" style="left:0px;top:129.5px;width:275.8px;height:8.55px;background:#80ff80;"></div>
<div class="a" style="left:0px;top:138.05px;width:275.8px;height:0.7px;background:#b0fab0;"></div>
<div class="a" style="left:275.8px;top:138.05px;width:66.2px;height:0.7px;background:#f0f0f0;"></div>
<div class="a" style="left:78.5px;top:130.4px;width:7.2px;height:7.2px;border:1px solid #8a96ac;background:linear-gradient(#fafafa,#e2e6ee)"></div>
<svg class="a" style="left:78.5px;top:130.4px" width="7.2" height="7.2" viewBox="0 0 7 7"><path d="M1.7 3.5 L3 5.3 L5.5 1.3" stroke="#20307a" stroke-width="1.1" fill="none"/></svg>
<div class="t" style="left:98.00px;top:132.00px;font-size:6.6px;transform:scaleX(0.86)">&lt;Remnant&gt;</div>
<div class="t" style="left:155.00px;top:132.00px;font-size:6.6px;transform:scaleX(0.86)">199</div>
<div class="t" style="left:179.50px;top:132.00px;font-size:6.6px;transform:scaleX(0.86)">215</div>
<div class="t" style="left:204.00px;top:132.00px;font-size:6.6px;transform:scaleX(0.86)">430</div>
<div class="t" style="left:229.50px;top:132.00px;font-size:6.6px;transform:scaleX(0.86)"></div>
<div class="t" style="left:262.00px;top:132.00px;font-size:6.6px;transform:scaleX(0.86)">15</div>
<div class="a" style="left:0px;top:138.75px;width:275.8px;height:8.55px;background:#80ff80;"></div>
<div class="a" style="left:0px;top:147.3px;width:275.8px;height:0.7px;background:#b0fab0;"></div>
<div class="a" style="left:275.8px;top:147.3px;width:66.2px;height:0.7px;background:#f0f0f0;"></div>
<div class="a" style="left:59.5px;top:139.65px;width:7.2px;height:7.2px;border:1px solid #8a96ac;background:linear-gradient(#fafafa,#e2e6ee)"></div>
<svg class="a" style="left:59.5px;top:139.65px" width="7.2" height="7.2" viewBox="0 0 7 7"><path d="M1.7 3.5 L3 5.3 L5.5 1.3" stroke="#20307a" stroke-width="1.1" fill="none"/></svg>
<div class="t" style="left:79.00px;top:141.00px;font-size:6.6px;transform:scaleX(0.86)">&lt;Loss&gt;</div>
<div class="t" style="left:155.00px;top:141.00px;font-size:6.6px;transform:scaleX(0.86)">1439</div>
<div class="t" style="left:179.50px;top:141.00px;font-size:6.6px;transform:scaleX(0.86)">835</div>
<div class="t" style="left:204.00px;top:141.00px;font-size:6.6px;transform:scaleX(0.86)">20</div>
<div class="t" style="left:229.50px;top:141.00px;font-size:6.6px;transform:scaleX(0.86)"></div>
<div class="t" style="left:262.00px;top:141.00px;font-size:6.6px;transform:scaleX(0.86)">16</div>
<div class="a" style="left:0px;top:156.55px;width:342px;height:0.7px;background:#f0f0f0;"></div>
<div class="a" style="left:34.3px;top:150.8px;width:0;height:0;border-left:3px solid transparent;border-bottom:3px solid #111"></div>
<div class="a" style="left:40.5px;top:148.9px;width:7.2px;height:7.2px;border:1px solid #b4b4b4;background:linear-gradient(#f6f6f6,#dcdcdc)"></div>
<div class="t" style="left:60.00px;top:150.00px;font-size:6.6px;transform:scaleX(0.86)">&lt;X&gt;</div>
<div class="t" style="left:155.00px;top:150.00px;font-size:6.6px;transform:scaleX(0.86)">2139</div>
<div class="t" style="left:179.50px;top:150.00px;font-size:6.6px;transform:scaleX(0.86)">1155</div>
<div class="t" style="left:204.00px;top:150.00px;font-size:6.6px;transform:scaleX(0.86)">450</div>
<div class="t" style="left:229.50px;top:150.00px;font-size:6.6px;transform:scaleX(0.86)">X (1640)</div>
<div class="t" style="left:262.00px;top:150.00px;font-size:6.6px;transform:scaleX(0.86)">17</div>
<div class="a" style="left:0px;top:165.8px;width:342px;height:0.7px;background:#f0f0f0;"></div>
<div class="a" style="left:50.0px;top:158.15px;width:7.2px;height:7.2px;border:1px solid #b4b4b4;background:linear-gradient(#f6f6f6,#dcdcdc)"></div>
<div class="a" style="left:59.3px;top:157.95px;width:7.6px;height:7.6px;background:#80ffc0;"></div>
<div class="t" style="left:69.50px;top:160.00px;font-size:6.6px;transform:scaleX(0.86)">64130126 (Y:7)</div>
<div class="t" style="left:155.00px;top:160.00px;font-size:6.6px;transform:scaleX(0.86)">1640</div>
<div class="t" style="left:179.50px;top:160.00px;font-size:6.6px;transform:scaleX(0.86)">1155</div>
<div class="t" style="left:204.00px;top:160.00px;font-size:6.6px;transform:scaleX(0.86)">450</div>
<div class="t" style="left:229.50px;top:160.00px;font-size:6.6px;transform:scaleX(0.86)"></div>
<div class="t" style="left:262.00px;top:160.00px;font-size:6.6px;transform:scaleX(0.86)">18</div>
<div class="a" style="left:0px;top:175.05px;width:342px;height:0.7px;background:#f0f0f0;"></div>
<div class="a" style="left:43.8px;top:169.3px;width:0;height:0;border-left:3px solid transparent;border-bottom:3px solid #111"></div>
<div class="a" style="left:50.0px;top:167.4px;width:7.2px;height:7.2px;border:1px solid #b4b4b4;background:linear-gradient(#f6f6f6,#dcdcdc)"></div>
<div class="t" style="left:69.50px;top:169.00px;font-size:6.6px;transform:scaleX(0.86)">&lt;Z&gt;</div>
<div class="t" style="left:155.00px;top:169.00px;font-size:6.6px;transform:scaleX(0.86)">499</div>
<div class="t" style="left:179.50px;top:169.00px;font-size:6.6px;transform:scaleX(0.86)">1155</div>
<div class="t" style="left:204.00px;top:169.00px;font-size:6.6px;transform:scaleX(0.86)">450</div>
<div class="t" style="left:229.50px;top:169.00px;font-size:6.6px;transform:scaleX(0.86)">Z (210)</div>
<div class="t" style="left:262.00px;top:169.00px;font-size:6.6px;transform:scaleX(0.86)">19</div>
<div class="a" style="left:0px;top:184.3px;width:342px;height:0.7px;background:#f0f0f0;"></div>
<div class="a" style="left:53.3px;top:178.55px;width:0;height:0;border-left:3px solid transparent;border-bottom:3px solid #111"></div>
<div class="a" style="left:59.5px;top:176.65px;width:7.2px;height:7.2px;border:1px solid #b4b4b4;background:linear-gradient(#f6f6f6,#dcdcdc)"></div>
<div class="t" style="left:79.00px;top:178.00px;font-size:6.6px;transform:scaleX(0.86)">&lt;X&gt;</div>
<div class="t" style="left:155.00px;top:178.00px;font-size:6.6px;transform:scaleX(0.86)">499</div>
<div class="t" style="left:179.50px;top:178.00px;font-size:6.6px;transform:scaleX(0.86)">1155</div>
<div class="t" style="left:204.00px;top:178.00px;font-size:6.6px;transform:scaleX(0.86)">210</div>
<div class="t" style="left:229.50px;top:178.00px;font-size:6.6px;transform:scaleX(0.86)">X (334)</div>
<div class="t" style="left:262.00px;top:178.00px;font-size:6.6px;transform:scaleX(0.86)">20</div>
<div class="a" style="left:0px;top:193.55px;width:342px;height:0.7px;background:#f0f0f0;"></div>
<div class="a" style="left:62.8px;top:187.8px;width:0;height:0;border-left:3px solid transparent;border-bottom:3px solid #111"></div>
<div class="a" style="left:69.0px;top:185.9px;width:7.2px;height:7.2px;border:1px solid #b4b4b4;background:linear-gradient(#f6f6f6,#dcdcdc)"></div>
<div class="t" style="left:88.50px;top:187.00px;font-size:6.6px;transform:scaleX(0.86)">&lt;Y&gt;</div>
<div class="t" style="left:155.00px;top:187.00px;font-size:6.6px;transform:scaleX(0.86)">334</div>
<div class="t" style="left:179.50px;top:187.00px;font-size:6.6px;transform:scaleX(0.86)">1155</div>
<div class="t" style="left:204.00px;top:187.00px;font-size:6.6px;transform:scaleX(0.86)">210</div>
<div class="t" style="left:229.50px;top:187.00px;font-size:6.6px;transform:scaleX(0.86)">Y (1090)</div>
<div class="t" style="left:262.00px;top:187.00px;font-size:6.6px;transform:scaleX(0.86)">21</div>
<div class="a" style="left:0px;top:202.8px;width:342px;height:0.7px;background:#f0f0f0;"></div>
<div class="a" style="left:78.5px;top:195.15px;width:7.2px;height:7.2px;border:1px solid #b4b4b4;background:linear-gradient(#f6f6f6,#dcdcdc)"></div>
<div class="a" style="left:87.8px;top:194.95px;width:7.6px;height:7.6px;background:#c0ff80;"></div>
<div class="t" style="left:98.00px;top:197.00px;font-size:6.6px;transform:scaleX(0.86)">61380320 (Y:3)</div>
<div class="t" style="left:155.00px;top:197.00px;font-size:6.6px;transform:scaleX(0.86)">334</div>
<div class="t" style="left:179.50px;top:197.00px;font-size:6.6px;transform:scaleX(0.86)">1090</div>
<div class="t" style="left:204.00px;top:197.00px;font-size:6.6px;transform:scaleX(0.86)">210</div>
<div class="t" style="left:229.50px;top:197.00px;font-size:6.6px;transform:scaleX(0.86)"></div>
<div class="t" style="left:262.00px;top:197.00px;font-size:6.6px;transform:scaleX(0.86)">22</div>
<div class="a" style="left:0px;top:212.05px;width:342px;height:0.7px;background:#f0f0f0;"></div>
<div class="a" style="left:78.5px;top:204.4px;width:7.2px;height:7.2px;border:1px solid #b4b4b4;background:linear-gradient(#f6f6f6,#dcdcdc)"></div>
<div class="t" style="left:98.00px;top:206.00px;font-size:6.6px;transform:scaleX(0.86)">&lt;Loss&gt;</div>
<div class="t" style="left:155.00px;top:206.00px;font-size:6.6px;transform:scaleX(0.86)">334</div>
<div class="t" style="left:179.50px;top:206.00px;font-size:6.6px;transform:scaleX(0.86)">65</div>
<div class="t" style="left:204.00px;top:206.00px;font-size:6.6px;transform:scaleX(0.86)">210</div>
<div class="t" style="left:229.50px;top:206.00px;font-size:6.6px;transform:scaleX(0.86)"></div>
<div class="t" style="left:262.00px;top:206.00px;font-size:6.6px;transform:scaleX(0.86)">23</div>
<div class="a" style="left:0px;top:221.3px;width:342px;height:0.7px;background:#f0f0f0;"></div>
<div class="a" style="left:69.0px;top:213.65px;width:7.2px;height:7.2px;border:1px solid #b4b4b4;background:linear-gradient(#f6f6f6,#dcdcdc)"></div>
<div class="t" style="left:88.50px;top:215.00px;font-size:6.6px;transform:scaleX(0.86)">&lt;Remnant&gt;</div>
<div class="t" style="left:155.00px;top:215.00px;font-size:6.6px;transform:scaleX(0.86)">165</div>
<div class="t" style="left:179.50px;top:215.00px;font-size:6.6px;transform:scaleX(0.86)">1155</div>
<div class="t" style="left:204.00px;top:215.00px;font-size:6.6px;transform:scaleX(0.86)">210</div>
<div class="t" style="left:229.50px;top:215.00px;font-size:6.6px;transform:scaleX(0.86)"></div>
<div class="t" style="left:262.00px;top:215.00px;font-size:6.6px;transform:scaleX(0.86)">24</div>
<div class="a" style="left:0px;top:230.55px;width:342px;height:0.7px;background:#f0f0f0;"></div>
<div class="a" style="left:53.3px;top:224.8px;width:0;height:0;border-left:3px solid transparent;border-bottom:3px solid #111"></div>
<div class="a" style="left:59.5px;top:222.9px;width:7.2px;height:7.2px;border:1px solid #b4b4b4;background:linear-gradient(#f6f6f6,#dcdcdc)"></div>
<div class="t" style="left:79.00px;top:224.00px;font-size:6.6px;transform:scaleX(0.86)">&lt;Y&gt;</div>
<div class="t" style="left:155.00px;top:224.00px;font-size:6.6px;transform:scaleX(0.86)">499</div>
<div class="t" style="left:179.50px;top:224.00px;font-size:6.6px;transform:scaleX(0.86)">1155</div>
<div class="t" style="left:204.00px;top:224.00px;font-size:6.6px;transform:scaleX(0.86)">240</div>
<div class="t" style="left:229.50px;top:224.00px;font-size:6.6px;transform:scaleX(0.86)">Y (610)</div>
<div class="t" style="left:262.00px;top:224.00px;font-size:6.6px;transform:scaleX(0.86)">25</div>
<div class="a" style="left:0px;top:239.8px;width:342px;height:0.7px;background:#f0f0f0;"></div>
<div class="a" style="left:69.0px;top:232.15px;width:7.2px;height:7.2px;border:1px solid #b4b4b4;background:linear-gradient(#f6f6f6,#dcdcdc)"></div>
<div class="a" style="left:78.3px;top:231.95px;width:7.6px;height:7.6px;background:#ff8080;"></div>
<div class="t" style="left:88.50px;top:234.00px;font-size:6.6px;transform:scaleX(0.86)">60490005 (Y:2)</div>
<div class="t" style="left:155.00px;top:234.00px;font-size:6.6px;transform:scaleX(0.86)">499</div>
<div class="t" style="left:179.50px;top:234.00px;font-size:6.6px;transform:scaleX(0.86)">610</div>
<div class="t" style="left:204.00px;top:234.00px;font-size:6.6px;transform:scaleX(0.86)">240</div>
<div class="t" style="left:229.50px;top:234.00px;font-size:6.6px;transform:scaleX(0.86)"></div>
<div class="t" style="left:262.00px;top:234.00px;font-size:6.6px;transform:scaleX(0.86)">26</div>
<div class="a" style="left:0px;top:249.05px;width:342px;height:0.7px;background:#f0f0f0;"></div>
<div class="a" style="left:69.0px;top:241.4px;width:7.2px;height:7.2px;border:1px solid #b4b4b4;background:linear-gradient(#f6f6f6,#dcdcdc)"></div>
<div class="t" style="left:88.50px;top:243.00px;font-size:6.6px;transform:scaleX(0.86)">&lt;Remnant&gt;</div>
<div class="t" style="left:155.00px;top:243.00px;font-size:6.6px;transform:scaleX(0.86)">499</div>
<div class="t" style="left:179.50px;top:243.00px;font-size:6.6px;transform:scaleX(0.86)">545</div>
<div class="t" style="left:204.00px;top:243.00px;font-size:6.6px;transform:scaleX(0.86)">240</div>
<div class="t" style="left:229.50px;top:243.00px;font-size:6.6px;transform:scaleX(0.86)"></div>
<div class="t" style="left:262.00px;top:243.00px;font-size:6.6px;transform:scaleX(0.86)">27</div>
<div class="a" style="left:0px;top:258.3px;width:342px;height:0.7px;background:#f0f0f0;"></div>
<div class="a" style="left:15.3px;top:252.55px;width:0;height:0;border-left:3px solid transparent;border-bottom:3px solid #111"></div>
<div class="a" style="left:21.5px;top:250.65px;width:7.2px;height:7.2px;border:1px solid #b4b4b4;background:linear-gradient(#f6f6f6,#dcdcdc)"></div>
<div class="t" style="left:41.00px;top:252.00px;font-size:6.6px;transform:scaleX(0.86)">&lt;X&gt;</div>
<div class="t" style="left:155.00px;top:252.00px;font-size:6.6px;transform:scaleX(0.86)">2270</div>
<div class="t" style="left:179.50px;top:252.00px;font-size:6.6px;transform:scaleX(0.86)">1990</div>
<div class="t" style="left:204.00px;top:252.00px;font-size:6.6px;transform:scaleX(0.86)">700</div>
<div class="t" style="left:229.50px;top:252.00px;font-size:6.6px;transform:scaleX(0.86)">X (261)</div>
<div class="t" style="left:262.00px;top:252.00px;font-size:6.6px;transform:scaleX(0.86)">28</div>
<div class="a" style="left:0px;top:267.55px;width:342px;height:0.7px;background:#f0f0f0;"></div>
<div class="a" style="left:24.8px;top:261.8px;width:0;height:0;border-left:3px solid transparent;border-bottom:3px solid #111"></div>
<div class="a" style="left:31.0px;top:259.9px;width:7.2px;height:7.2px;border:1px solid #b4b4b4;background:linear-gradient(#f6f6f6,#dcdcdc)"></div>
<div class="t" style="left:50.50px;top:261.00px;font-size:6.6px;transform:scaleX(0.86)">&lt;Y&gt;</div>
<div class="t" style="left:155.00px;top:261.00px;font-size:6.6px;transform:scaleX(0.86)">261</div>
<div class="t" style="left:179.50px;top:261.00px;font-size:6.6px;transform:scaleX(0.86)">1990</div>
<div class="t" style="left:204.00px;top:261.00px;font-size:6.6px;transform:scaleX(0.86)">700</div>
<div class="t" style="left:229.50px;top:261.00px;font-size:6.6px;transform:scaleX(0.86)">Y (1640)</div>
<div class="t" style="left:262.00px;top:261.00px;font-size:6.6px;transform:scaleX(0.86)">29</div>
<div class="a" style="left:0px;top:276.8px;width:342px;height:0.7px;background:#f0f0f0;"></div>
<div class="a" style="left:34.3px;top:271.05px;width:0;height:0;border-left:3px solid transparent;border-bottom:3px solid #111"></div>
<div class="a" style="left:40.5px;top:269.15px;width:7.2px;height:7.2px;border:1px solid #b4b4b4;background:linear-gradient(#f6f6f6,#dcdcdc)"></div>
<div class="t" style="left:60.00px;top:271.00px;font-size:6.6px;transform:scaleX(0.86)">&lt;Z&gt;</div>
<div class="t" style="left:155.00px;top:271.00px;font-size:6.6px;transform:scaleX(0.86)">261</div>
<div class="t" style="left:179.50px;top:271.00px;font-size:6.6px;transform:scaleX(0.86)">1640</div>
<div class="t" style="left:204.00px;top:271.00px;font-size:6.6px;transform:scaleX(0.86)">700</div>
<div class="t" style="left:229.50px;top:271.00px;font-size:6.6px;transform:scaleX(0.86)">Z (630)</div>
<div class="t" style="left:262.00px;top:271.00px;font-size:6.6px;transform:scaleX(0.86)">30</div>
<div class="a" style="left:0px;top:286.05px;width:342px;height:0.7px;background:#f0f0f0;"></div>
<div class="a" style="left:50.0px;top:278.4px;width:7.2px;height:7.2px;border:1px solid #b4b4b4;background:linear-gradient(#f6f6f6,#dcdcdc)"></div>
<div class="a" style="left:59.3px;top:278.2px;width:7.6px;height:7.6px;background:#80c0ff;"></div>
<div class="t" style="left:69.50px;top:280.00px;font-size:6.6px;transform:scaleX(0.86)">64130486 (X:2)</div>
<div class="t" style="left:155.00px;top:280.00px;font-size:6.6px;transform:scaleX(0.86)">261</div>
<div class="t" style="left:179.50px;top:280.00px;font-size:6.6px;transform:scaleX(0.86)">1640</div>
<div class="t" style="left:204.00px;top:280.00px;font-size:6.6px;transform:scaleX(0.86)">630</div>
<div class="t" style="left:229.50px;top:280.00px;font-size:6.6px;transform:scaleX(0.86)"></div>
<div class="t" style="left:262.00px;top:280.00px;font-size:6.6px;transform:scaleX(0.86)">31</div>
<div class="a" style="left:0px;top:295.3px;width:342px;height:0.7px;background:#f0f0f0;"></div>
<div class="a" style="left:50.0px;top:287.65px;width:7.2px;height:7.2px;border:1px solid #b4b4b4;background:linear-gradient(#f6f6f6,#dcdcdc)"></div>
<div class="t" style="left:69.50px;top:289.00px;font-size:6.6px;transform:scaleX(0.86)">&lt;Loss&gt;</div>
<div class="t" style="left:155.00px;top:289.00px;font-size:6.6px;transform:scaleX(0.86)">261</div>
<div class="t" style="left:179.50px;top:289.00px;font-size:6.6px;transform:scaleX(0.86)">1640</div>
<div class="t" style="left:204.00px;top:289.00px;font-size:6.6px;transform:scaleX(0.86)">70</div>
<div class="t" style="left:229.50px;top:289.00px;font-size:6.6px;transform:scaleX(0.86)"></div>
<div class="t" style="left:262.00px;top:289.00px;font-size:6.6px;transform:scaleX(0.86)">32</div>
<div class="a" style="left:0px;top:304.55px;width:342px;height:0.7px;background:#f0f0f0;"></div>
<div class="a" style="left:40.5px;top:296.9px;width:7.2px;height:7.2px;border:1px solid #b4b4b4;background:linear-gradient(#f6f6f6,#dcdcdc)"></div>
<div class="t" style="left:60.00px;top:298.00px;font-size:6.6px;transform:scaleX(0.86)">&lt;Remnant&gt;</div>
<div class="t" style="left:155.00px;top:298.00px;font-size:6.6px;transform:scaleX(0.86)">261</div>
<div class="t" style="left:179.50px;top:298.00px;font-size:6.6px;transform:scaleX(0.86)">350</div>
<div class="t" style="left:204.00px;top:298.00px;font-size:6.6px;transform:scaleX(0.86)">700</div>
<div class="t" style="left:229.50px;top:298.00px;font-size:6.6px;transform:scaleX(0.86)"></div>
<div class="t" style="left:262.00px;top:298.00px;font-size:6.6px;transform:scaleX(0.86)">33</div>
<div class="a" style="left:0px;top:313.8px;width:342px;height:0.7px;background:#f0f0f0;"></div>
<div class="a" style="left:24.8px;top:308.05px;width:0;height:0;border-left:3px solid transparent;border-bottom:3px solid #111"></div>
<div class="a" style="left:31.0px;top:306.15px;width:7.2px;height:7.2px;border:1px solid #b4b4b4;background:linear-gradient(#f6f6f6,#dcdcdc)"></div>
<div class="t" style="left:50.50px;top:308.00px;font-size:6.6px;transform:scaleX(0.86)">&lt;Y&gt;</div>
<div class="t" style="left:155.00px;top:308.00px;font-size:6.6px;transform:scaleX(0.86)">2009</div>
<div class="t" style="left:179.50px;top:308.00px;font-size:6.6px;transform:scaleX(0.86)">1990</div>
<div class="t" style="left:204.00px;top:308.00px;font-size:6.6px;transform:scaleX(0.86)">700</div>
<div class="t" style="left:229.50px;top:308.00px;font-size:6.6px;transform:scaleX(0.86)">Y (330)</div>
<div class="t" style="left:262.00px;top:308.00px;font-size:6.6px;transform:scaleX(0.86)">34</div>
<div class="a" style="left:0px;top:323.05px;width:342px;height:0.7px;background:#f0f0f0;"></div>
<div class="a" style="left:34.3px;top:317.3px;width:0;height:0;border-left:3px solid transparent;border-bottom:3px solid #111"></div>
<div class="a" style="left:40.5px;top:315.4px;width:7.2px;height:7.2px;border:1px solid #b4b4b4;background:linear-gradient(#f6f6f6,#dcdcdc)"></div>
<div class="t" style="left:60.00px;top:317.00px;font-size:6.6px;transform:scaleX(0.86)">&lt;X&gt;</div>
<div class="t" style="left:155.00px;top:317.00px;font-size:6.6px;transform:scaleX(0.86)">2009</div>
<div class="t" style="left:179.50px;top:317.00px;font-size:6.6px;transform:scaleX(0.86)">330</div>
<div class="t" style="left:204.00px;top:317.00px;font-size:6.6px;transform:scaleX(0.86)">700</div>
<div class="t" style="left:229.50px;top:317.00px;font-size:6.6px;transform:scaleX(0.86)">X (1995)</div>
<div class="t" style="left:262.00px;top:317.00px;font-size:6.6px;transform:scaleX(0.86)">35</div>
<div class="a" style="left:0px;top:332.3px;width:342px;height:0.7px;background:#f0f0f0;"></div>
<div class="a" style="left:50.0px;top:324.65px;width:7.2px;height:7.2px;border:1px solid #b4b4b4;background:linear-gradient(#f6f6f6,#dcdcdc)"></div>
<div class="a" style="left:59.3px;top:324.45px;width:7.6px;height:7.6px;background:#c080ff;"></div>
<div class="t" style="left:69.50px;top:326.00px;font-size:6.6px;transform:scaleX(0.86)">67260196 (Z:5)</div>
<div class="t" style="left:155.00px;top:326.00px;font-size:6.6px;transform:scaleX(0.86)">1995</div>
<div class="t" style="left:179.50px;top:326.00px;font-size:6.6px;transform:scaleX(0.86)">330</div>
<div class="t" style="left:204.00px;top:326.00px;font-size:6.6px;transform:scaleX(0.86)">700</div>
<div class="t" style="left:229.50px;top:326.00px;font-size:6.6px;transform:scaleX(0.86)"></div>
<div class="t" style="left:262.00px;top:326.00px;font-size:6.6px;transform:scaleX(0.86)">36</div>
<div class="a" style="left:0px;top:341.55px;width:342px;height:0.7px;background:#f0f0f0;"></div>
<div class="a" style="left:50.0px;top:333.9px;width:7.2px;height:7.2px;border:1px solid #b4b4b4;background:linear-gradient(#f6f6f6,#dcdcdc)"></div>
<div class="t" style="left:69.50px;top:335.00px;font-size:6.6px;transform:scaleX(0.86)">&lt;Loss&gt;</div>
<div class="t" style="left:155.00px;top:335.00px;font-size:6.6px;transform:scaleX(0.86)">14</div>
<div class="t" style="left:179.50px;top:335.00px;font-size:6.6px;transform:scaleX(0.86)">330</div>
<div class="t" style="left:204.00px;top:335.00px;font-size:6.6px;transform:scaleX(0.86)">700</div>
<div class="t" style="left:229.50px;top:335.00px;font-size:6.6px;transform:scaleX(0.86)"></div>
<div class="t" style="left:262.00px;top:335.00px;font-size:6.6px;transform:scaleX(0.86)">37</div>
<div class="a" style="left:0px;top:350.8px;width:342px;height:0.7px;background:#f0f0f0;"></div>
<div class="a" style="left:34.3px;top:345.05px;width:0;height:0;border-left:3px solid transparent;border-bottom:3px solid #111"></div>
<div class="a" style="left:40.5px;top:343.15px;width:7.2px;height:7.2px;border:1px solid #b4b4b4;background:linear-gradient(#f6f6f6,#dcdcdc)"></div>
<div class="t" style="left:60.00px;top:345.00px;font-size:6.6px;transform:scaleX(0.86)">&lt;Z&gt;</div>
<div class="t" style="left:155.00px;top:345.00px;font-size:6.6px;transform:scaleX(0.86)">2009</div>
<div class="t" style="left:179.50px;top:345.00px;font-size:6.6px;transform:scaleX(0.86)">1660</div>
<div class="t" style="left:204.00px;top:345.00px;font-size:6.6px;transform:scaleX(0.86)">700</div>
<div class="t" style="left:229.50px;top:345.00px;font-size:6.6px;transform:scaleX(0.86)">Z (536)</div>
<div class="t" style="left:262.00px;top:345.00px;font-size:6.6px;transform:scaleX(0.86)">38</div>
<div class="a" style="left:0px;top:360.05px;width:342px;height:0.7px;background:#f0f0f0;"></div>
<div class="a" style="left:43.8px;top:354.3px;width:0;height:0;border-left:3px solid transparent;border-bottom:3px solid #111"></div>
<div class="a" style="left:50.0px;top:352.4px;width:7.2px;height:7.2px;border:1px solid #b4b4b4;background:linear-gradient(#f6f6f6,#dcdcdc)"></div>
<div class="t" style="left:69.50px;top:354.00px;font-size:6.6px;transform:scaleX(0.86)">&lt;X&gt;</div>
<div class="t" style="left:155.00px;top:354.00px;font-size:6.6px;transform:scaleX(0.86)">2009</div>
<div class="t" style="left:179.50px;top:354.00px;font-size:6.6px;transform:scaleX(0.86)">1660</div>
<div class="t" style="left:204.00px;top:354.00px;font-size:6.6px;transform:scaleX(0.86)">536</div>
<div class="t" style="left:229.50px;top:354.00px;font-size:6.6px;transform:scaleX(0.86)">X (1995)</div>
<div class="t" style="left:262.00px;top:354.00px;font-size:6.6px;transform:scaleX(0.86)">39</div>
<div class="a" style="left:0px;top:369.3px;width:342px;height:0.7px;background:#f0f0f0;"></div>
<div class="a" style="left:53.3px;top:363.55px;width:0;height:0;border-left:3px solid transparent;border-bottom:3px solid #111"></div>
<div class="a" style="left:59.5px;top:361.65px;width:7.2px;height:7.2px;border:1px solid #b4b4b4;background:linear-gradient(#f6f6f6,#dcdcdc)"></div>
<div class="t" style="left:79.00px;top:363.00px;font-size:6.6px;transform:scaleX(0.86)">&lt;Y&gt;</div>
<div class="t" style="left:155.00px;top:363.00px;font-size:6.6px;transform:scaleX(0.86)">1995</div>
<div class="t" style="left:179.50px;top:363.00px;font-size:6.6px;transform:scaleX(0.86)">1660</div>
<div class="t" style="left:204.00px;top:363.00px;font-size:6.6px;transform:scaleX(0.86)">536</div>
<div class="t" style="left:229.50px;top:363.00px;font-size:6.6px;transform:scaleX(0.86)">Y (1655 7...</div>
<div class="t" style="left:262.00px;top:363.00px;font-size:6.6px;transform:scaleX(0.86)">40</div>
<div class="a" style="left:177px;top:0px;width:0.7px;height:370px;background:rgba(0,0,0,0.06);"></div>
<div class="a" style="left:201.5px;top:0px;width:0.7px;height:370px;background:rgba(0,0,0,0.06);"></div>
<div class="a" style="left:226px;top:0px;width:0.7px;height:370px;background:rgba(0,0,0,0.06);"></div>
<div class="a" style="left:259px;top:0px;width:0.7px;height:370px;background:rgba(0,0,0,0.06);"></div>
<div class="a" style="left:275.5px;top:0px;width:0.7px;height:370px;background:rgba(0,0,0,0.06);"></div>
</div>
<div class="a" style="left:344px;top:159px;width:9px;height:381.5px;background:#f0f0f0;border-left:1px solid #e6e6e6"></div>
<div class="a" style="left:346.5px;top:162.5px;width:0;height:0;border-left:2px solid transparent;border-right:2px solid transparent;border-bottom:2px solid #303030"></div>
<div class="a" style="left:345px;top:169px;width:7.2px;height:224px;background:linear-gradient(90deg,#ececec,#dadada);border:1px solid #b2b2b2;border-radius:2px"></div>
<div class="a" style="left:347px;top:279px;width:3.2px;height:4px;background:transparent;border-top:1px solid #8a8a8a;border-bottom:1px solid #8a8a8a"></div>
<div class="a" style="left:346.5px;top:534.5px;width:0;height:0;border-left:2px solid transparent;border-right:2px solid transparent;border-top:2px solid #303030"></div>
<div class="a" style="left:355px;top:146.5px;width:441.5px;height:395.5px;background:#fff;border:1px solid #cacaca"></div>
<div class="a" style="left:356px;top:147.5px;width:439.5px;height:11.5px;background:#ececec;border-bottom:1px solid #d6d6d6"></div>
<div class="a" style="left:356.5px;top:147.5px;width:61.5px;height:11.5px;background:#f2f2f2;border-right:1px solid #c8c8c8"></div>
<div class="a" style="left:358.5px;top:149px;width:3px;height:7.5px;background:#20d020"></div><div class="a" style="left:358.5px;top:154.5px;width:3px;height:2px;background:#d02020"></div><div class="a" style="left:361.5px;top:149px;width:3.5px;height:2px;background:#40c8f0"></div><div class="a" style="left:361.5px;top:151px;width:3.5px;height:5.5px;background:#1010d0"></div>
<div class="t" style="left:368.00px;top:151.00px;font-size:6.8px;transform:scaleX(0.87)">Plan de coupe 2D</div>
<div class="a" style="left:418px;top:147px;width:50.5px;height:12.5px;background:#fdfdfd;border-right:1px solid #c8c8c8"></div>
<div class="a" style="left:420px;top:149px;width:3px;height:7.5px;background:#20d020"></div><div class="a" style="left:420px;top:154.5px;width:3px;height:2px;background:#d02020"></div><div class="a" style="left:423px;top:149px;width:3.5px;height:2px;background:#40c8f0"></div><div class="a" style="left:423px;top:151px;width:3.5px;height:5.5px;background:#1010d0"></div>
<div class="t" style="left:430.00px;top:151.00px;font-size:6.8px;transform:scaleX(0.9)">3D Cut layout</div>
<svg class="a" style="left:736px;top:148.5px" width="9" height="9" viewBox="0 0 9 9"><circle cx="3.6" cy="3.6" r="2.4" stroke="#404040" stroke-width="1" fill="none"/><path d="M5.3 5.3 L8.2 8.2" stroke="#303030" stroke-width="1.5"/></svg>
<div class="t" style="left:748.50px;top:149.00px;font-size:9.2px;transform:scaleX(1);color:#303030;-webkit-text-stroke:0.3px #303030">A</div>
<div class="t" style="left:760.50px;top:149.00px;font-size:9.2px;transform:scaleX(1);color:#303030;-webkit-text-stroke:0.3px #303030">A</div>
<div class="a" style="left:773.5px;top:149.6px;width:5.5px;height:2.4px;border:0.8px solid #808080;border-radius:1.2px;background:#c8c8c8"></div>
<div class="a" style="left:785px;top:149.5px;width:6px;height:6px;border:1px solid #707070;border-top-width:1.8px;background:#f4f4f4"></div>
<div class="t" style="left:775.00px;top:161.00px;font-size:7px;transform:scaleX(0.9);color:#202020">Z (450)</div>
<svg class="a" style="left:0;top:0" width="800" height="555" viewBox="0 0 800 555">
<polygon points="565.20,343.50 575.49,339.63 451.48,292.62 441.19,296.50" fill="#ff80ff" stroke="#1c3a48" stroke-width="0.8" stroke-linejoin="round"/>
<polygon points="565.20,343.50 441.19,296.50 441.19,342.44 565.20,389.44" fill="#ff80ff" stroke="#1c3a48" stroke-width="0.8" stroke-linejoin="round"/>
<polygon points="565.20,343.50 575.49,339.63 575.49,385.57 565.20,389.44" fill="#ff80ff" stroke="#1c3a48" stroke-width="0.8" stroke-linejoin="round"/>
<polygon points="441.19,296.50 451.48,292.62 419.29,280.43 409.00,284.30" fill="#dde6f0" stroke="#1c3a48" stroke-width="0.8" stroke-linejoin="round"/>
<polygon points="441.19,296.50 409.00,284.30 409.00,330.24 441.19,342.44" fill="#dde6f0" stroke="#1c3a48" stroke-width="0.8" stroke-linejoin="round"/>
<polygon points="575.49,339.63 630.48,318.94 564.94,294.09 509.95,314.79" fill="#8080ff" stroke="#1c3a48" stroke-width="0.8" stroke-linejoin="round"/>
<polygon points="575.49,339.63 630.48,318.94 630.48,364.88 575.49,385.57" fill="#8080ff" stroke="#1c3a48" stroke-width="0.8" stroke-linejoin="round"/>
<polygon points="630.48,318.94 679.18,300.61 613.64,275.77 564.94,294.09" fill="#80ffff" stroke="#1c3a48" stroke-width="0.8" stroke-linejoin="round"/>
<polygon points="630.48,318.94 679.18,300.61 679.18,344.51 630.48,362.84" fill="#80ffff" stroke="#1c3a48" stroke-width="0.8" stroke-linejoin="round"/>
<polygon points="679.18,300.61 727.88,282.28 662.34,257.44 613.64,275.77" fill="#80ffff" stroke="#1c3a48" stroke-width="0.8" stroke-linejoin="round"/>
<polygon points="679.18,300.61 727.88,282.28 727.88,326.18 679.18,344.51" fill="#80ffff" stroke="#1c3a48" stroke-width="0.8" stroke-linejoin="round"/>
<polygon points="727.88,282.28 743.51,276.40 694.84,257.95 679.21,263.84" fill="#80ffff" stroke="#1c3a48" stroke-width="0.8" stroke-linejoin="round"/>
<polygon points="727.88,282.28 743.51,276.40 743.51,320.30 727.88,326.18" fill="#80ffff" stroke="#1c3a48" stroke-width="0.8" stroke-linejoin="round"/>
<polygon points="679.21,263.84 694.84,257.95 677.97,251.56 662.34,257.44" fill="#dde6f0" stroke="#1c3a48" stroke-width="0.8" stroke-linejoin="round"/>
<polygon points="630.48,362.84 743.51,320.30 743.51,322.34 630.48,364.88" fill="#808080" stroke="#1c3a48" stroke-width="0.8" stroke-linejoin="round"/>
<polygon points="509.95,314.79 638.77,266.31 548.12,231.95 419.29,280.43" fill="#80ffc0" stroke="#1c3a48" stroke-width="0.8" stroke-linejoin="round"/>
<polygon points="638.77,266.31 665.01,256.43 579.45,224.01 553.22,233.88" fill="#c0ff80" stroke="#1c3a48" stroke-width="0.8" stroke-linejoin="round"/>
<polygon points="553.22,233.88 579.45,224.01 574.35,222.07 548.12,231.95" fill="#808080" stroke="#1c3a48" stroke-width="0.8" stroke-linejoin="round"/>
<polygon points="665.01,256.43 677.97,251.56 587.31,217.20 574.35,222.07" fill="#dde6f0" stroke="#1c3a48" stroke-width="0.8" stroke-linejoin="round"/>
<polygon points="565.20,389.44 436.48,340.65 436.48,404.98 565.20,453.77" fill="#80c0ff" stroke="#1c3a48" stroke-width="0.8" stroke-linejoin="round"/>
<polygon points="565.20,389.44 585.70,381.73 585.70,446.05 565.20,453.77" fill="#80c0ff" stroke="#1c3a48" stroke-width="0.8" stroke-linejoin="round"/>
<polygon points="565.20,453.77 436.48,404.98 436.48,412.12 565.20,460.91" fill="#808080" stroke="#1c3a48" stroke-width="0.8" stroke-linejoin="round"/>
<polygon points="565.20,453.77 585.70,446.05 585.70,453.20 565.20,460.91" fill="#808080" stroke="#1c3a48" stroke-width="0.8" stroke-linejoin="round"/>
<polygon points="436.48,340.65 409.00,330.24 409.00,401.71 436.48,412.12" fill="#dde6f0" stroke="#1c3a48" stroke-width="0.8" stroke-linejoin="round"/>
<polygon points="585.70,381.73 742.41,322.76 742.41,394.23 585.70,453.20" fill="#c080ff" stroke="#1c3a48" stroke-width="0.8" stroke-linejoin="round"/>
<polygon points="742.41,322.76 743.51,322.34 743.51,393.81 742.41,394.23" fill="#808080" stroke="#1c3a48" stroke-width="0.8" stroke-linejoin="round"/>
<line x1="409.00" y1="284.30" x2="587.31" y2="217.20" stroke="#ffd49a" stroke-width="1.5"/>
<line x1="409.00" y1="284.30" x2="587.31" y2="217.20" stroke="#e87a10" stroke-width="1.5" stroke-dasharray="1.1 1"/>
<line x1="587.31" y1="217.20" x2="743.51" y2="276.40" stroke="#ffd49a" stroke-width="1.5"/>
<line x1="587.31" y1="217.20" x2="743.51" y2="276.40" stroke="#e87a10" stroke-width="1.5" stroke-dasharray="1.1 1"/>
<line x1="743.51" y1="276.40" x2="743.51" y2="393.81" stroke="#ffd49a" stroke-width="1.5"/>
<line x1="743.51" y1="276.40" x2="743.51" y2="393.81" stroke="#e87a10" stroke-width="1.5" stroke-dasharray="1.1 1"/>
<line x1="743.51" y1="393.81" x2="565.20" y2="460.91" stroke="#ffd49a" stroke-width="1.5"/>
<line x1="743.51" y1="393.81" x2="565.20" y2="460.91" stroke="#e87a10" stroke-width="1.5" stroke-dasharray="1.1 1"/>
<line x1="565.20" y1="460.91" x2="409.00" y2="401.71" stroke="#ffd49a" stroke-width="1.5"/>
<line x1="565.20" y1="460.91" x2="409.00" y2="401.71" stroke="#e87a10" stroke-width="1.5" stroke-dasharray="1.1 1"/>
<line x1="409.00" y1="401.71" x2="409.00" y2="284.30" stroke="#ffd49a" stroke-width="1.5"/>
<line x1="409.00" y1="401.71" x2="409.00" y2="284.30" stroke="#e87a10" stroke-width="1.5" stroke-dasharray="1.1 1"/>
<line x1="565.20" y1="343.50" x2="565.20" y2="460.91" stroke="#ffd49a" stroke-width="1.5"/>
<line x1="565.20" y1="343.50" x2="565.20" y2="460.91" stroke="#e87a10" stroke-width="1.5" stroke-dasharray="1.1 1"/>
<line x1="409.00" y1="284.30" x2="565.20" y2="343.50" stroke="#ffd49a" stroke-width="1.5"/>
<line x1="409.00" y1="284.30" x2="565.20" y2="343.50" stroke="#e87a10" stroke-width="1.5" stroke-dasharray="1.1 1"/>
<line x1="565.20" y1="343.50" x2="743.51" y2="276.40" stroke="#ffd49a" stroke-width="1.5"/>
<line x1="565.20" y1="343.50" x2="743.51" y2="276.40" stroke="#e87a10" stroke-width="1.5" stroke-dasharray="1.1 1"/>
<text x="425.10" y="294.48" transform="rotate(20.8 425.10 294.48)" font-family="Liberation Sans" font-size="4.6" fill="#1c2858" stroke="#1c2858" stroke-width="0.12" text-anchor="middle" dominant-baseline="central">410</text>
<text x="486.95" y="317.72" transform="rotate(20.8 486.95 317.72)" font-family="Liberation Sans" font-size="4.6" fill="#1c2858" stroke="#1c2858" stroke-width="0.12" text-anchor="middle" dominant-baseline="central">1580</text>
<text x="502.02" y="324.25" transform="rotate(20.8 502.02 324.25)" font-family="Liberation Sans" font-size="4.6" fill="#1c2858" stroke="#1c2858" stroke-width="0.12" text-anchor="middle" dominant-baseline="central">1580</text>
<text x="439.62" y="321.42" transform="rotate(-90.0 439.62 321.42)" font-family="Liberation Sans" font-size="4.6" fill="#1c2858" stroke="#1c2858" stroke-width="0.12" text-anchor="middle" dominant-baseline="central">620</text>
<text x="562.06" y="367.83" transform="rotate(-90.0 562.06 367.83)" font-family="Liberation Sans" font-size="4.6" fill="#1c2858" stroke="#1c2858" stroke-width="0.12" text-anchor="middle" dominant-baseline="central">450</text>
<text x="569.91" y="345.81" transform="rotate(-20.6 569.91 345.81)" font-family="Liberation Sans" font-size="4.6" fill="#1c2858" stroke="#1c2858" stroke-width="0.12" text-anchor="middle" dominant-baseline="central">131</text>
<text x="602.90" y="333.40" transform="rotate(-20.6 602.90 333.40)" font-family="Liberation Sans" font-size="4.6" fill="#e0e0ff" stroke="#e0e0ff" stroke-width="0.12" text-anchor="middle" dominant-baseline="central">700</text>
<text x="654.83" y="313.86" transform="rotate(-20.6 654.83 313.86)" font-family="Liberation Sans" font-size="4.6" fill="#1c2858" stroke="#1c2858" stroke-width="0.12" text-anchor="middle" dominant-baseline="central">2080</text>
<text x="703.53" y="295.53" transform="rotate(-20.6 703.53 295.53)" font-family="Liberation Sans" font-size="4.6" fill="#1c2858" stroke="#1c2858" stroke-width="0.12" text-anchor="middle" dominant-baseline="central">620</text>
<text x="735.65" y="283.44" transform="rotate(-20.6 735.65 283.44)" font-family="Liberation Sans" font-size="4.6" fill="#1c2858" stroke="#1c2858" stroke-width="0.12" text-anchor="middle" dominant-baseline="central">199</text>
<text x="422.74" y="340.55" transform="rotate(20.8 422.74 340.55)" font-family="Liberation Sans" font-size="4.6" fill="#1c2858" stroke="#1c2858" stroke-width="0.12" text-anchor="middle" dominant-baseline="central">250</text>
<text x="434.12" y="375.50" transform="rotate(-90.0 434.12 375.50)" font-family="Liberation Sans" font-size="4.6" fill="#1c2858" stroke="#1c2858" stroke-width="0.12" text-anchor="middle" dominant-baseline="central">700</text>
<text x="500.84" y="372.20" transform="rotate(20.8 500.84 372.20)" font-family="Liberation Sans" font-size="4.6" fill="#1c2858" stroke="#1c2858" stroke-width="0.12" text-anchor="middle" dominant-baseline="central">1640</text>
<text x="568.34" y="403.58" transform="rotate(-90.0 568.34 403.58)" font-family="Liberation Sans" font-size="4.6" fill="#1c2858" stroke="#1c2858" stroke-width="0.12" text-anchor="middle" dominant-baseline="central">1150</text>
<text x="560.49" y="422.37" transform="rotate(-90.0 560.49 422.37)" font-family="Liberation Sans" font-size="4.6" fill="#1c2858" stroke="#1c2858" stroke-width="0.12" text-anchor="middle" dominant-baseline="central">630</text>
<text x="575.41" y="390.71" transform="rotate(-20.6 575.41 390.71)" font-family="Liberation Sans" font-size="4.6" fill="#1c2858" stroke="#1c2858" stroke-width="0.12" text-anchor="middle" dominant-baseline="central">261</text>
<text x="588.77" y="416.31" transform="rotate(-90.0 588.77 416.31)" font-family="Liberation Sans" font-size="4.6" fill="#1c2858" stroke="#1c2858" stroke-width="0.12" text-anchor="middle" dominant-baseline="central">700</text>
<text x="664.17" y="359.35" transform="rotate(-20.6 664.17 359.35)" font-family="Liberation Sans" font-size="4.6" fill="#1c2858" stroke="#1c2858" stroke-width="0.12" text-anchor="middle" dominant-baseline="central">1995</text>
<text x="500.84" y="433.97" transform="rotate(20.8 500.84 433.97)" font-family="Liberation Sans" font-size="4.6" fill="#e8e8e8" stroke="#e8e8e8" stroke-width="0.12" text-anchor="middle" dominant-baseline="central">1640</text>
</svg>
<div class="a" style="left:357.4px;top:495.5px;width:88.60000000000002px;height:7.7px;background:#80ffc0;"></div>
<div class="a" style="left:446px;top:495.5px;width:84px;height:7.7px;background:#80ffff;"></div>
<div class="a" style="left:530px;top:495.5px;width:83px;height:7.7px;background:#80ffff;"></div>
<div class="a" style="left:613px;top:495.5px;width:82px;height:7.7px;background:#8080ff;"></div>
<div class="a" style="left:695px;top:495.5px;width:87px;height:7.7px;background:#ff80ff;"></div>
<div class="t" style="left:357.60px;top:496.00px;font-size:7.6px;transform:scaleX(0.829);color:#1c382a">64130126: x:1640 y:1155 z:450</div>
<div class="t" style="left:446.20px;top:496.00px;font-size:7.6px;transform:scaleX(0.849);color:#1c3838">64130404: x:199 y:620 z:430</div>
<div class="t" style="left:530.20px;top:496.00px;font-size:7.6px;transform:scaleX(0.838);color:#1c3838">64130404: x:620 y:835 z:430</div>
<div class="t" style="left:613.20px;top:496.00px;font-size:7.6px;transform:scaleX(0.828);color:#1c1c38">67100051: x:700 y:835 z:450</div>
<div class="t" style="left:695.20px;top:496.00px;font-size:7.6px;transform:scaleX(0.843);color:#381c38">69080136: x:131 y:1580 z:450</div>
<div class="a" style="left:357.4px;top:503.2px;width:85.60000000000002px;height:7.7px;background:#ff8098;"></div>
<div class="a" style="left:443px;top:503.2px;width:86px;height:7.7px;background:#c080ff;"></div>
<div class="a" style="left:529px;top:503.2px;width:86px;height:7.7px;background:#80c0ff;"></div>
<div class="a" style="left:615px;top:503.2px;width:83px;height:7.7px;background:#ff8080;"></div>
<div class="a" style="left:698px;top:503.2px;width:87px;height:7.7px;background:#c0ff80;"></div>
<div class="t" style="left:357.60px;top:504.00px;font-size:7.6px;transform:scaleX(0.829);color:#381c21">95121602: x:1995 y:780 z:536</div>
<div class="t" style="left:443.20px;top:504.00px;font-size:7.6px;transform:scaleX(0.833);color:#2a1c38">67260196: x:1995 y:330 z:700</div>
<div class="t" style="left:529.20px;top:504.00px;font-size:7.6px;transform:scaleX(0.833);color:#1c2a38">64130486: x:261 y:1640 z:630</div>
<div class="t" style="left:615.20px;top:504.00px;font-size:7.6px;transform:scaleX(0.838);color:#381c1c">60490005: x:499 y:610 z:240</div>
<div class="t" style="left:698.20px;top:504.00px;font-size:7.6px;transform:scaleX(0.843);color:#2a381c">61380320: x:334 y:1090 z:210</div>
<div class="a" style="left:357.4px;top:510.7px;width:81.60000000000002px;height:7.4px;background:#c080ff;"></div>
<div class="a" style="left:439px;top:510.7px;width:79px;height:7.4px;background:#80ff80;"></div>
<div class="a" style="left:518px;top:510.7px;width:86px;height:7.4px;background:#ffc080;"></div>
<div class="a" style="left:604px;top:510.7px;width:88px;height:7.4px;background:#ffff80;"></div>
<div class="a" style="left:692px;top:510.7px;width:86px;height:7.4px;background:#ff8080;"></div>
<div class="t" style="left:357.60px;top:512.00px;font-size:7.6px;transform:scaleX(0.824);color:#2a1c38">67260196: x:1995 y:700 z:90</div>
<div class="t" style="left:439.20px;top:512.00px;font-size:7.6px;transform:scaleX(0.834);color:#1c381c">62170154: x:385 y:590 z:95</div>
<div class="t" style="left:518.20px;top:512.00px;font-size:7.6px;transform:scaleX(0.833);color:#382a1c">61370044: x:1500 y:760 z:164</div>
<div class="t" style="left:604.20px;top:512.00px;font-size:7.6px;transform:scaleX(0.853);color:#38381c">61370612: x:1600 y:180 z:164</div>
<div class="t" style="left:692.20px;top:512.00px;font-size:7.6px;transform:scaleX(0.833);color:#381c1c">95121802: x:1995 y:875 z:536</div>
<div class="t" style="left:783.50px;top:493.00px;font-size:9px;transform:scaleX(1);color:#505050">×</div>
<div class="t" style="left:764.50px;top:493.00px;font-size:5px;transform:scaleX(1);color:#303030">Y</div>
<div class="t" style="left:774.50px;top:509.00px;font-size:6px;transform:scaleX(1);color:#303030">z</div>
<div class="a" style="left:356px;top:519.5px;width:439.5px;height:21.5px;background:#f7f7f7;"></div>
<div class="a" style="left:361px;top:528px;width:432px;height:1px;background:#d4d4d4;"></div>
<div class="a" style="left:361px;top:523px;width:6.2px;height:11px;background:linear-gradient(90deg,#f2f2f2,#cccccc);border:1px solid #8c8c8c;border-radius:2px"></div>
<div class="a" style="left:1px;top:542px;width:799px;height:13px;background:#f0f0f0;"></div>
<div class="a" style="left:2.5px;top:544.5px;width:1.2px;height:1.2px;background:#505050;"></div>
<div class="a" style="left:2.5px;top:546.7px;width:1.2px;height:1.2px;background:#505050;"></div>
<div class="a" style="left:2.5px;top:548.9px;width:1.2px;height:1.2px;background:#505050;"></div>
<div class="a" style="left:797px;top:146px;width:3px;height:395px;background:#f0f0f0;border-left:1px solid #d4d4d4"></div>
<div class="a" style="left:0px;top:11px;width:1.3px;height:544px;background:#507850;"></div>
<div class="a" style="left:1.3px;top:11px;width:0.8px;height:544px;background:rgba(200,236,200,0.6);"></div>
</div></body></html>
